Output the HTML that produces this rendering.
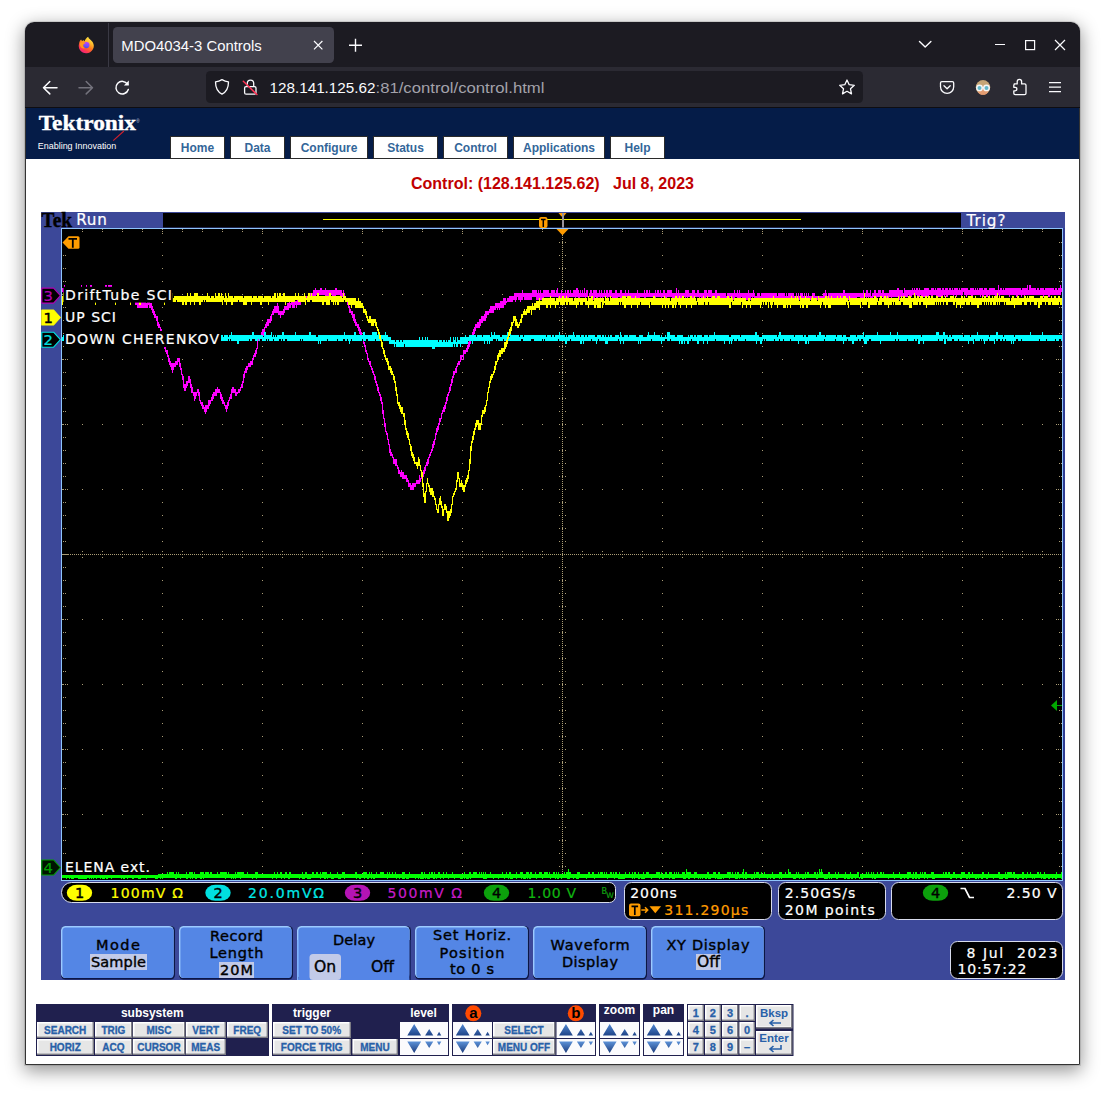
<!DOCTYPE html>
<html lang="en"><head><meta charset="utf-8"><title>MDO4034-3 Controls</title>
<style>
html,body{margin:0;padding:0;background:#fff;}
body{width:1105px;height:1093px;position:relative;overflow:hidden;font-family:"Liberation Sans",sans-serif;}
#win{position:absolute;left:25px;top:22px;width:1055px;height:1043px;border-radius:9px 9px 0 0;
 box-shadow:0 5px 18px 1px rgba(0,0,0,.42),0 0 0 1px rgba(0,0,0,.10);overflow:hidden;background:#fff;}
#win svg{position:absolute;left:0;top:0;display:block}
text{white-space:pre}
.ui{font-family:"Liberation Sans",sans-serif}
.sc{font-family:"DejaVu Sans","Liberation Sans",sans-serif}
.ab{font-family:"Liberation Sans",sans-serif;font-weight:bold}
</style></head><body>
<div id="win">
<svg width="1055" height="1043" viewBox="25 22 1055 1043">
<defs><linearGradient id="ffo" x1="0.85" y1="0.05" x2="0.3" y2="1"><stop offset="0" stop-color="#fff24a"/><stop offset="0.3" stop-color="#ffbd2f"/><stop offset="0.55" stop-color="#ff7a1c"/><stop offset="0.8" stop-color="#ff3a4e"/><stop offset="1" stop-color="#f0207e"/></linearGradient><linearGradient id="ffp" x1="0.6" y1="0" x2="0.4" y2="1"><stop offset="0" stop-color="#c03cff"/><stop offset="0.55" stop-color="#7a4cff"/><stop offset="1" stop-color="#3f52d8"/></linearGradient></defs>
<rect x="25" y="22" width="1055" height="45" fill="#1c1b22"/>
<rect x="25" y="67" width="1055" height="40" fill="#2b2a33"/>
<rect x="25" y="107" width="1055" height="1" fill="#0e0d12"/>
<g><path d="M86.100 53.200a7.300 7.300 0 0 1-7-9.600c.2-1.900.9-3.200 2-4.100c.2.800.6 1.300 1.200 1.500c.4-.500.800-.700 1.400-.800l.900 1.300c.200-2 1.700-3.400 3.500-4.800c.600 2 2.800 3.200 4.500 5.300a7.300 7.300 0 0 1-6.500 11.200z" fill="url(#ffo)"/><circle cx="86.400" cy="45.100" r="3.100" fill="url(#ffp)"/><path d="M80.300 42.600c1.500-.900 3.300-.700 5.600.600c-1.700.200-2.700.900-3 2c-.300 1.400.700 2.600 2.300 2.900c-2.200.900-4.300-.100-5-2.100c-.400-1.200-.300-2.400.100-3.400z" fill="#ff9a1a"/></g>
<rect x="108" y="23" width="1" height="44" fill="#3a3944"/>
<rect x="113" y="27" width="221" height="36" rx="4.500" fill="#42414d"/>
<text class="ui" x="121.300" y="50.600" font-size="14.600" fill="#fbfbfe" textLength="140.500" lengthAdjust="spacingAndGlyphs">MDO4034-3 Controls</text>
<path d="M314 41l8.400 8.400M322.400 41l-8.400 8.400" stroke="#fbfbfe" stroke-width="1.200" fill="none"/>
<path d="M349 45.300h13M355.500 38.800v13" stroke="#fbfbfe" stroke-width="1.400" fill="none"/>
<path d="M919.500 41.500l5.700 5.600l5.700-5.600" stroke="#fbfbfe" stroke-width="1.400" fill="none" stroke-linejoin="round" stroke-linecap="round"/>
<path d="M995 44.500h10" stroke="#fbfbfe" stroke-width="1.200" fill="none"/>
<rect x="1025.600" y="40.600" width="9" height="9" fill="none" stroke="#fbfbfe" stroke-width="1.200"/>
<path d="M1055 40l10 10M1065 40l-10 10" stroke="#fbfbfe" stroke-width="1.200" fill="none"/>
<path d="M57 87.700h-13.500M49.800 81.500l-6.300 6.200l6.300 6.200" stroke="#fbfbfe" stroke-width="1.500" fill="none" stroke-linecap="round" stroke-linejoin="round"/>
<path d="M79 87.700h13.500M86.200 81.500l6.300 6.200l-6.300 6.200" stroke="#73727c" stroke-width="1.500" fill="none" stroke-linecap="round" stroke-linejoin="round"/>
<path d="M127.600 84.300a6.300 6.300 0 1 0 .7 5.200" stroke="#fbfbfe" stroke-width="1.500" fill="none" stroke-linecap="round"/><path d="M128.800 80.600v4.900h-4.900z" fill="#fbfbfe"/>
<rect x="206" y="71" width="657" height="32" rx="4.500" fill="#1c1b22"/>
<path d="M222 79.600c2.100 1.300 4.300 2 6.500 2.200c0 5.600-1.800 10-6.500 12.400c-4.700-2.400-6.500-6.800-6.500-12.400c2.200-.2 4.400-.9 6.500-2.200z" stroke="#fbfbfe" stroke-width="1.300" fill="none" stroke-linejoin="round"/>
<rect x="244.600" y="86.600" width="11.400" height="7.600" rx="1.500" fill="none" stroke="#fbfbfe" stroke-width="1.300"/><path d="M247.300 86.400v-3.100a3.200 3.200 0 0 1 6.400 0v3.100" fill="none" stroke="#fbfbfe" stroke-width="1.300"/><path d="M243.300 81.200l13.600 13.300" stroke="#ff3355" stroke-width="1.500" fill="none" stroke-linecap="round"/>
<text class="ui" x="269.500" y="93" font-size="14.600"><tspan fill="#fbfbfe" textLength="106" lengthAdjust="spacingAndGlyphs">128.141.125.62</tspan><tspan fill="#a3a2ab" textLength="169" lengthAdjust="spacingAndGlyphs">:81/control/control.html</tspan></text>
<path d="M847 80l2.200 4.700l5.100.6l-3.800 3.500l1 5.100l-4.500-2.600l-4.500 2.600l1-5.100l-3.800-3.500l5.100-.6z" stroke="#fbfbfe" stroke-width="1.300" fill="none" stroke-linejoin="round"/>
<path d="M941.900 81.700h10.400a1.400 1.400 0 0 1 1.400 1.400v3.700a6.600 6.600 0 0 1-13.200 0v-3.700a1.400 1.400 0 0 1 1.400-1.400z" stroke="#fbfbfe" stroke-width="1.300" fill="none"/><path d="M944 85.800l3.100 3l3.100-3" stroke="#fbfbfe" stroke-width="1.300" fill="none" stroke-linecap="round" stroke-linejoin="round"/>
<g><circle cx="983" cy="87.300" r="7.200" fill="#c6a576"/><path d="M977.600 88.500a5.400 5.800 0 0 0 10.800 0v2a5.400 4.600 0 0 1-10.800 0z" fill="#e0986c"/><ellipse cx="983" cy="91" rx="4.800" ry="3.600" fill="#e39c72"/><rect x="976.200" y="87" width="13.600" height="1.400" fill="#f2f2f2"/><circle cx="979.500" cy="87.900" r="2.700" fill="#62b6c8" stroke="#f6f6f6" stroke-width="1.400"/><circle cx="986.500" cy="87.900" r="2.700" fill="#62b6c8" stroke="#f6f6f6" stroke-width="1.400"/></g>
<path d="M1014.200 83.900h3v-2.300a2.200 2.200 0 0 1 4.400 0v2.300h3a1.400 1.400 0 0 1 1.400 1.400v8a1.400 1.400 0 0 1-1.400 1.400h-9.400a1.400 1.400 0 0 1-1.400-1.400v-2.400h1.300a1.800 1.800 0 1 0 0-3.600h-1.300v-2a1.400 1.400 0 0 1 1.400-1.400z" stroke="#fbfbfe" stroke-width="1.300" fill="none" stroke-linejoin="round"/>
<path d="M1049 82.600h12M1049 87.100h12M1049 91.600h12" stroke="#fbfbfe" stroke-width="1.300" fill="none"/>
<rect x="25" y="108" width="1055" height="957" fill="#ffffff"/>
<rect x="25" y="108" width="1055" height="51" fill="#051c48"/>
<text x="38.700" y="129.800" font-family="'Liberation Serif',serif" font-weight="bold" font-size="20.500" fill="#ffffff" textLength="97.300" lengthAdjust="spacingAndGlyphs" stroke="#ffffff" stroke-width="0.350">Tektronix</text>
<text x="136.300" y="123.400" font-family="'Liberation Sans',sans-serif" font-size="4.500" fill="#c8d0e0">®</text>
<path d="M113.200 140.600L123.900 131" stroke="#d3202c" stroke-width="1.100" fill="none"/>
<text class="ui" x="37.800" y="148.900" font-size="9.700" fill="#ffffff" textLength="78.500" lengthAdjust="spacingAndGlyphs">Enabling Innovation</text>
<rect x="170.5" y="136.500" width="54" height="22" fill="#ffffff" stroke="#2a2a2a" stroke-width="1"/>
<text class="ab" x="197.5" y="151.600" font-size="12" fill="#336699" text-anchor="middle">Home</text>
<rect x="230.5" y="136.500" width="54" height="22" fill="#ffffff" stroke="#2a2a2a" stroke-width="1"/>
<text class="ab" x="257.5" y="151.600" font-size="12" fill="#336699" text-anchor="middle">Data</text>
<rect x="290.5" y="136.500" width="77" height="22" fill="#ffffff" stroke="#2a2a2a" stroke-width="1"/>
<text class="ab" x="329" y="151.600" font-size="12" fill="#336699" text-anchor="middle">Configure</text>
<rect x="373.5" y="136.500" width="64" height="22" fill="#ffffff" stroke="#2a2a2a" stroke-width="1"/>
<text class="ab" x="405.5" y="151.600" font-size="12" fill="#336699" text-anchor="middle">Status</text>
<rect x="443.5" y="136.500" width="64" height="22" fill="#ffffff" stroke="#2a2a2a" stroke-width="1"/>
<text class="ab" x="475.5" y="151.600" font-size="12" fill="#336699" text-anchor="middle">Control</text>
<rect x="513.5" y="136.500" width="91" height="22" fill="#ffffff" stroke="#2a2a2a" stroke-width="1"/>
<text class="ab" x="559" y="151.600" font-size="12" fill="#336699" text-anchor="middle">Applications</text>
<rect x="610.5" y="136.500" width="54" height="22" fill="#ffffff" stroke="#2a2a2a" stroke-width="1"/>
<text class="ab" x="637.5" y="151.600" font-size="12" fill="#336699" text-anchor="middle">Help</text>
<text class="ab" x="552.500" y="188.700" font-size="16" fill="#c00000" text-anchor="middle" textLength="283" lengthAdjust="spacingAndGlyphs">Control: (128.141.125.62)   Jul 8, 2023</text>
<g id="scope">
<rect x="41" y="212" width="1024" height="768" fill="#3c4899"/>
<rect x="163" y="213" width="798" height="14.500" fill="#000"/>
<rect x="61.500" y="228.500" width="1001" height="652" fill="#000" stroke="#8ec4fb" stroke-width="1"/>
<rect x="1063" y="228" width="2" height="653" fill="#303c92"/>
<g stroke="#ab9d76" stroke-width="1" fill="none" shape-rendering="crispEdges">
<path d="M162.5 229V879" stroke-dasharray="1 12"/>
<path d="M262.5 229V879" stroke-dasharray="1 12"/>
<path d="M362.5 229V879" stroke-dasharray="1 12"/>
<path d="M462.5 229V879" stroke-dasharray="1 12"/>
<path d="M662.5 229V879" stroke-dasharray="1 12"/>
<path d="M762.5 229V879" stroke-dasharray="1 12"/>
<path d="M862.5 229V879" stroke-dasharray="1 12"/>
<path d="M962.5 229V879" stroke-dasharray="1 12"/>
<path d="M62 294.5H1062" stroke-dasharray="1 19"/>
<path d="M62 359.5H1062" stroke-dasharray="1 19"/>
<path d="M62 424.5H1062" stroke-dasharray="1 19"/>
<path d="M62 489.5H1062" stroke-dasharray="1 19"/>
<path d="M62 619.5H1062" stroke-dasharray="1 19"/>
<path d="M62 684.5H1062" stroke-dasharray="1 19"/>
<path d="M62 749.5H1062" stroke-dasharray="1 19"/>
<path d="M62 814.5H1062" stroke-dasharray="1 19"/>
<path d="M62 554.5H1062" stroke-dasharray="1 1"/>
<path d="M562.5 229V879" stroke-dasharray="1 1"/>
<path d="M82.5 551v7M102.5 551v7M122.5 551v7M142.5 551v7M162.5 551v7M182.5 551v7M202.5 551v7M222.5 551v7M242.5 551v7M262.5 551v7M282.5 551v7M302.5 551v7M322.5 551v7M342.5 551v7M362.5 551v7M382.5 551v7M402.5 551v7M422.5 551v7M442.5 551v7M462.5 551v7M482.5 551v7M502.5 551v7M522.5 551v7M542.5 551v7M582.5 551v7M602.5 551v7M622.5 551v7M642.5 551v7M662.5 551v7M682.5 551v7M702.5 551v7M722.5 551v7M742.5 551v7M762.5 551v7M782.5 551v7M802.5 551v7M822.5 551v7M842.5 551v7M862.5 551v7M882.5 551v7M902.5 551v7M922.5 551v7M942.5 551v7M962.5 551v7M982.5 551v7M1002.5 551v7M1022.5 551v7M1042.5 551v7" stroke-dasharray="1 2"/>
<path d="M559 242.5h7M559 255.5h7M559 268.5h7M559 281.5h7M559 294.5h7M559 307.5h7M559 320.5h7M559 333.5h7M559 346.5h7M559 359.5h7M559 372.5h7M559 385.5h7M559 398.5h7M559 411.5h7M559 424.5h7M559 437.5h7M559 450.5h7M559 463.5h7M559 476.5h7M559 489.5h7M559 502.5h7M559 515.5h7M559 528.5h7M559 541.5h7M559 567.5h7M559 580.5h7M559 593.5h7M559 606.5h7M559 619.5h7M559 632.5h7M559 645.5h7M559 658.5h7M559 671.5h7M559 684.5h7M559 697.5h7M559 710.5h7M559 723.5h7M559 736.5h7M559 749.5h7M559 762.5h7M559 775.5h7M559 788.5h7M559 801.5h7M559 814.5h7M559 827.5h7M559 840.5h7M559 853.5h7M559 866.5h7" stroke-dasharray="1 2"/>
<path d="M63 242.5h3M63 255.5h3M63 268.5h3M63 281.5h3M63 294.5h5M63 307.5h3M63 320.5h3M63 333.5h3M63 346.5h3M63 359.5h5M63 372.5h3M63 385.5h3M63 398.5h3M63 411.5h3M63 424.5h5M63 437.5h3M63 450.5h3M63 463.5h3M63 476.5h3M63 489.5h5M63 502.5h3M63 515.5h3M63 528.5h3M63 541.5h3M63 554.5h5M63 567.5h3M63 580.5h3M63 593.5h3M63 606.5h3M63 619.5h5M63 632.5h3M63 645.5h3M63 658.5h3M63 671.5h3M63 684.5h5M63 697.5h3M63 710.5h3M63 723.5h3M63 736.5h3M63 749.5h5M63 762.5h3M63 775.5h3M63 788.5h3M63 801.5h3M63 814.5h5M63 827.5h3M63 840.5h3M63 853.5h3M63 866.5h3M1059 242.5h3M1059 255.5h3M1059 268.5h3M1059 281.5h3M1056 294.5h5M1059 307.5h3M1059 320.5h3M1059 333.5h3M1059 346.5h3M1056 359.5h5M1059 372.5h3M1059 385.5h3M1059 398.5h3M1059 411.5h3M1056 424.5h5M1059 437.5h3M1059 450.5h3M1059 463.5h3M1059 476.5h3M1056 489.5h5M1059 502.5h3M1059 515.5h3M1059 528.5h3M1059 541.5h3M1056 554.5h5M1059 567.5h3M1059 580.5h3M1059 593.5h3M1059 606.5h3M1056 619.5h5M1059 632.5h3M1059 645.5h3M1059 658.5h3M1059 671.5h3M1056 684.5h5M1059 697.5h3M1059 710.5h3M1059 723.5h3M1059 736.5h3M1056 749.5h5M1059 762.5h3M1059 775.5h3M1059 788.5h3M1059 801.5h3M1056 814.5h5M1059 827.5h3M1059 840.5h3M1059 853.5h3M1059 866.5h3" stroke-dasharray="1 1"/>
<path d="M82.5 229v3M82.5 875v3M102.5 229v3M102.5 875v3M122.5 229v3M122.5 875v3M142.5 229v3M142.5 875v3M162.5 229v5M162.5 873v5M182.5 229v3M182.5 875v3M202.5 229v3M202.5 875v3M222.5 229v3M222.5 875v3M242.5 229v3M242.5 875v3M262.5 229v5M262.5 873v5M282.5 229v3M282.5 875v3M302.5 229v3M302.5 875v3M322.5 229v3M322.5 875v3M342.5 229v3M342.5 875v3M362.5 229v5M362.5 873v5M382.5 229v3M382.5 875v3M402.5 229v3M402.5 875v3M422.5 229v3M422.5 875v3M442.5 229v3M442.5 875v3M462.5 229v5M462.5 873v5M482.5 229v3M482.5 875v3M502.5 229v3M502.5 875v3M522.5 229v3M522.5 875v3M542.5 229v3M542.5 875v3M562.5 229v5M562.5 873v5M582.5 229v3M582.5 875v3M602.5 229v3M602.5 875v3M622.5 229v3M622.5 875v3M642.5 229v3M642.5 875v3M662.5 229v5M662.5 873v5M682.5 229v3M682.5 875v3M702.5 229v3M702.5 875v3M722.5 229v3M722.5 875v3M742.5 229v3M742.5 875v3M762.5 229v5M762.5 873v5M782.5 229v3M782.5 875v3M802.5 229v3M802.5 875v3M822.5 229v3M822.5 875v3M842.5 229v3M842.5 875v3M862.5 229v5M862.5 873v5M882.5 229v3M882.5 875v3M902.5 229v3M902.5 875v3M922.5 229v3M922.5 875v3M942.5 229v3M942.5 875v3M962.5 229v5M962.5 873v5M982.5 229v3M982.5 875v3M1002.5 229v3M1002.5 875v3M1022.5 229v3M1022.5 875v3M1042.5 229v3M1042.5 875v3" stroke-dasharray="1 1"/>
</g>
<path d="M62 872v6M63 874v4M64 874v4M65 874v4M66 874v5M67 874v4M68 872v6M69 874v5M70 872v6M71 874v5M72 872v7M73 872v7M74 874v4M75 872v6M76 872v6M77 872v6M78 872v7M79 874v5M80 874v5M81 874v5M82 874v5M83 874v5M84 874v5M85 874v5M86 872v7M87 874v4M88 874v4M89 874v5M90 874v4M91 874v5M92 872v6M93 872v7M94 872v6M95 874v4M96 872v7M97 874v4M98 872v6M99 872v6M100 874v5M101 874v4M102 874v5M103 872v7M104 874v5M105 872v6M106 874v5M107 874v5M108 872v6M109 874v4M110 874v4M111 874v5M112 872v6M113 874v4M114 874v4M115 872v6M116 872v6M117 872v6M118 874v4M119 874v4M120 872v6M121 872v7M122 874v4M123 872v7M124 874v5M125 874v4M126 874v4M127 874v5M128 874v4M129 872v6M130 872v6M131 874v4M132 874v5M133 874v5M134 874v4M135 874v4M136 872v6M137 874v4M138 872v7M139 872v7M140 874v5M141 872v6M142 874v4M143 874v4M144 872v6M145 872v6M146 874v5M147 872v6M148 874v4M149 874v4M150 874v4M151 872v6M152 872v6M153 872v6M154 874v4M155 872v7M156 872v7M157 874v5M158 874v4M159 874v4M160 874v5M161 874v4M162 874v5M163 874v4M164 874v4M165 874v4M166 874v4M167 872v6M168 874v4M169 872v6M170 872v6M171 872v6M172 872v6M173 872v6M174 874v4M175 874v5M176 872v7M177 874v4M178 872v6M179 874v4M180 874v5M181 874v4M182 874v4M183 874v4M184 874v4M185 874v4M186 872v7M187 874v5M188 874v4M189 872v6M190 872v7M191 872v6M192 872v7M193 874v4M194 872v6M195 874v5M196 874v5M197 874v4M198 874v4M199 874v4M200 872v7M201 872v7M202 872v6M203 872v7M204 874v4M205 872v6M206 872v6M207 872v6M208 872v6M209 874v4M210 872v6M211 872v6M212 874v4M213 874v4M214 874v4M215 874v4M216 874v4M217 872v6M218 874v4M219 874v4M220 872v6M221 872v6M222 872v6M223 872v6M224 872v6M225 872v7M226 872v6M227 874v4M228 872v6M229 874v4M230 874v4M231 874v5M232 874v4M233 874v5M234 874v4M235 872v7M236 874v4M237 872v6M238 872v6M239 872v6M240 872v7M241 872v6M242 872v6M243 872v6M244 874v4M245 874v4M246 874v4M247 872v6M248 874v4M249 874v4M250 874v4M251 874v4M252 874v5M253 874v4M254 874v4M255 872v6M256 872v7M257 872v6M258 874v4M259 874v4M260 874v4M261 874v4M262 874v4M263 874v4M264 874v4M265 874v4M266 874v4M267 874v4M268 874v4M269 874v4M270 874v4M271 874v4M272 874v5M273 874v4M274 872v6M275 874v4M276 874v5M277 872v6M278 874v4M279 874v4M280 872v6M281 872v7M282 874v4M283 874v4M284 874v5M285 872v6M286 872v6M287 874v4M288 874v5M289 872v7M290 872v6M291 874v4M292 874v4M293 874v4M294 874v4M295 874v4M296 874v4M297 874v4M298 874v4M299 874v5M300 874v4M301 874v4M302 872v7M303 874v5M304 874v5M305 872v6M306 872v6M307 874v5M308 874v5M309 874v5M310 874v5M311 874v4M312 872v6M313 872v6M314 874v4M315 874v4M316 872v6M317 872v6M318 874v4M319 874v4M320 872v7M321 874v4M322 872v6M323 872v6M324 872v7M325 872v7M326 872v6M327 874v5M328 874v4M329 874v4M330 872v6M331 874v5M332 874v5M333 874v5M334 874v4M335 874v4M336 874v4M337 872v6M338 874v5M339 874v5M340 874v5M341 874v4M342 872v6M343 872v6M344 872v7M345 874v4M346 874v4M347 874v4M348 874v4M349 874v4M350 874v4M351 874v4M352 874v4M353 874v4M354 874v4M355 872v6M356 872v7M357 874v4M358 874v4M359 874v5M360 874v5M361 874v4M362 874v4M363 872v6M364 872v7M365 872v6M366 872v6M367 874v5M368 874v5M369 872v6M370 874v4M371 872v7M372 874v4M373 874v5M374 874v5M375 874v4M376 872v6M377 874v4M378 874v4M379 874v4M380 872v6M381 872v6M382 872v6M383 872v6M384 874v4M385 874v4M386 874v4M387 872v7M388 874v4M389 872v6M390 874v4M391 874v4M392 872v6M393 874v4M394 874v4M395 872v6M396 874v5M397 874v4M398 874v4M399 874v5M400 874v4M401 874v4M402 872v7M403 872v7M404 872v7M405 874v4M406 874v5M407 874v5M408 874v5M409 872v6M410 874v4M411 874v4M412 874v4M413 874v4M414 874v4M415 874v5M416 874v4M417 874v4M418 874v5M419 874v4M420 874v5M421 872v7M422 872v7M423 874v5M424 872v6M425 874v5M426 874v4M427 874v5M428 874v5M429 872v7M430 874v4M431 872v6M432 872v6M433 874v5M434 872v7M435 874v4M436 874v5M437 874v4M438 872v6M439 872v6M440 874v5M441 874v4M442 874v4M443 872v7M444 874v4M445 874v4M446 872v6M447 874v4M448 874v5M449 874v4M450 874v4M451 874v4M452 872v6M453 874v4M454 874v5M455 874v4M456 874v4M457 874v4M458 874v4M459 874v4M460 874v5M461 874v5M462 874v5M463 874v4M464 872v7M465 874v4M466 874v5M467 874v5M468 874v5M469 872v6M470 872v7M471 874v4M472 874v4M473 872v6M474 872v6M475 872v6M476 872v6M477 874v4M478 874v4M479 872v6M480 874v4M481 872v6M482 874v4M483 872v7M484 874v5M485 872v7M486 874v5M487 874v4M488 874v4M489 874v4M490 872v6M491 874v4M492 874v4M493 874v5M494 874v4M495 874v4M496 874v4M497 874v4M498 874v5M499 874v4M500 874v4M501 874v4M502 872v6M503 874v4M504 874v5M505 874v4M506 872v6M507 874v4M508 874v5M509 872v6M510 872v7M511 874v5M512 874v5M513 874v4M514 874v4M515 874v4M516 872v7M517 874v4M518 874v4M519 874v4M520 872v6M521 872v7M522 872v6M523 874v5M524 874v5M525 874v5M526 872v6M527 872v7M528 872v6M529 874v5M530 872v7M531 872v6M532 874v4M533 874v4M534 874v4M535 872v6M536 874v5M537 874v4M538 874v4M539 872v6M540 872v6M541 872v6M542 874v5M543 874v4M544 872v6M545 872v6M546 872v6M547 872v6M548 874v4M549 872v6M550 874v5M551 874v4M552 874v4M553 872v6M554 872v6M555 874v5M556 872v6M557 874v5M558 872v7M559 874v4M560 874v4M561 874v5M562 874v4M563 874v4M564 872v6M565 874v4M566 872v6M567 872v7M568 869v10M569 872v7M570 872v6M571 874v4M572 874v4M573 874v5M574 874v4M575 874v4M576 874v5M577 872v7M578 872v7M579 872v6M580 874v4M581 874v4M582 874v4M583 874v4M584 874v4M585 874v4M586 874v5M587 874v4M588 872v6M589 872v6M590 874v4M591 874v4M592 872v6M593 872v6M594 874v5M595 874v4M596 874v4M597 874v4M598 872v6M599 874v4M600 872v6M601 872v6M602 872v6M603 874v4M604 872v6M605 874v4M606 872v6M607 874v5M608 874v4M609 874v4M610 872v6M611 872v6M612 874v4M613 872v6M614 874v5M615 872v6M616 872v6M617 874v4M618 874v5M619 872v7M620 874v5M621 874v5M622 874v5M623 874v5M624 874v5M625 872v6M626 874v4M627 874v4M628 874v4M629 872v6M630 874v4M631 874v4M632 872v7M633 874v4M634 872v7M635 872v6M636 874v4M637 874v4M638 872v7M639 874v5M640 874v4M641 874v5M642 874v5M643 872v7M644 874v5M645 874v4M646 872v6M647 872v6M648 872v6M649 874v4M650 874v4M651 874v5M652 874v4M653 874v4M654 874v4M655 874v4M656 872v6M657 872v6M658 872v6M659 872v7M660 874v4M661 872v6M662 874v5M663 874v5M664 874v4M665 872v6M666 872v6M667 874v4M668 874v4M669 872v7M670 872v6M671 872v6M672 874v5M673 874v5M674 872v7M675 874v4M676 872v6M677 874v4M678 872v6M679 874v4M680 874v4M681 874v4M682 872v6M683 872v7M684 872v7M685 874v5M686 869v9M687 872v6M688 872v7M689 872v7M690 872v6M691 874v4M692 874v4M693 874v4M694 872v7M695 872v6M696 872v6M697 874v4M698 874v5M699 874v4M700 874v5M701 874v4M702 874v5M703 874v4M704 874v4M705 874v5M706 874v5M707 872v6M708 872v7M709 874v5M710 874v5M711 874v4M712 874v4M713 872v6M714 872v6M715 872v7M716 874v4M717 874v5M718 872v7M719 872v7M720 874v5M721 874v5M722 874v4M723 874v5M724 874v4M725 874v4M726 874v4M727 872v6M728 872v6M729 872v7M730 872v6M731 874v4M732 872v6M733 874v4M734 874v4M735 872v7M736 874v5M737 872v7M738 872v6M739 874v5M740 874v4M741 874v4M742 872v6M743 869v10M744 874v4M745 872v7M746 872v7M747 874v4M748 874v4M749 874v4M750 874v4M751 874v5M752 874v5M753 874v4M754 872v7M755 874v4M756 872v6M757 872v6M758 872v6M759 874v5M760 874v4M761 872v6M762 874v4M763 874v4M764 872v6M765 874v4M766 874v4M767 874v5M768 874v4M769 874v4M770 874v5M771 874v4M772 872v6M773 874v5M774 874v5M775 874v4M776 874v4M777 874v4M778 874v4M779 872v7M780 872v6M781 872v7M782 874v4M783 874v4M784 874v4M785 872v6M786 874v4M787 874v4M788 869v9M789 872v6M790 872v6M791 874v4M792 874v4M793 874v5M794 874v5M795 874v5M796 872v6M797 874v4M798 872v6M799 874v5M800 874v4M801 874v4M802 874v5M803 874v5M804 874v4M805 872v7M806 874v4M807 872v6M808 872v6M809 874v4M810 874v4M811 874v4M812 874v4M813 874v4M814 872v6M815 872v6M816 874v5M817 872v7M818 874v4M819 869v9M820 872v6M821 869v9M822 872v6M823 874v4M824 874v5M825 874v5M826 874v5M827 874v5M828 872v6M829 872v7M830 874v4M831 874v5M832 874v4M833 874v4M834 874v4M835 872v6M836 874v5M837 874v5M838 872v6M839 874v4M840 874v4M841 874v4M842 874v4M843 874v4M844 874v5M845 872v7M846 874v4M847 874v5M848 874v5M849 874v5M850 872v6M851 874v5M852 874v5M853 874v4M854 874v4M855 874v5M856 874v4M857 872v6M858 872v6M859 877v2M860 874v4M861 874v5M862 874v5M863 874v4M864 874v4M865 874v4M866 872v6M867 874v4M868 872v6M869 874v4M870 874v4M871 872v6M872 874v5M873 872v6M874 874v5M875 874v5M876 874v4M877 872v6M878 874v4M879 874v4M880 872v6M881 872v6M882 874v4M883 872v6M884 874v4M885 874v4M886 874v4M887 874v4M888 874v5M889 874v4M890 874v4M891 874v4M892 874v4M893 872v6M894 874v5M895 874v4M896 874v4M897 874v4M898 874v4M899 872v6M900 874v5M901 874v5M902 874v4M903 874v4M904 874v5M905 874v4M906 874v4M907 872v7M908 872v7M909 872v6M910 872v6M911 874v4M912 874v5M913 872v7M914 874v4M915 872v7M916 872v7M917 874v4M918 874v5M919 874v5M920 872v6M921 874v4M922 872v6M923 874v4M924 872v7M925 872v6M926 874v4M927 874v5M928 874v4M929 874v4M930 874v4M931 872v6M932 872v7M933 872v7M934 874v5M935 874v4M936 874v4M937 874v4M938 874v4M939 874v4M940 874v4M941 874v4M942 874v4M943 872v6M944 874v4M945 872v6M946 872v6M947 874v4M948 872v6M949 872v6M950 874v5M951 874v5M952 874v4M953 872v6M954 872v6M955 874v4M956 874v5M957 874v4M958 874v4M959 874v4M960 874v5M961 872v7M962 872v6M963 872v6M964 872v6M965 874v4M966 874v5M967 874v5M968 872v6M969 872v7M970 874v4M971 874v4M972 872v6M973 874v4M974 874v4M975 874v5M976 874v5M977 874v4M978 874v5M979 874v4M980 874v4M981 874v5M982 872v7M983 872v6M984 874v4M985 874v4M986 874v5M987 874v5M988 872v6M989 874v4M990 874v4M991 874v4M992 874v4M993 874v5M994 874v4M995 874v4M996 874v4M997 874v4M998 872v6M999 872v7M1000 874v5M1001 874v5M1002 874v5M1003 874v4M1004 874v4M1005 872v7M1006 874v5M1007 872v7M1008 872v6M1009 872v6M1010 872v6M1011 872v6M1012 874v4M1013 872v6M1014 872v7M1015 874v4M1016 874v4M1017 874v5M1018 874v5M1019 874v4M1020 874v4M1021 874v4M1022 872v7M1023 872v7M1024 874v4M1025 874v4M1026 874v5M1027 872v6M1028 874v4M1029 874v4M1030 872v6M1031 874v4M1032 874v5M1033 874v4M1034 874v5M1035 874v4M1036 874v4M1037 872v6M1038 872v6M1039 874v4M1040 872v6M1041 874v5M1042 874v4M1043 874v5M1044 872v7M1045 874v5M1046 874v4M1047 874v4M1048 874v5M1049 874v5M1050 874v4M1051 874v4M1052 874v5M1053 874v4M1054 874v4M1055 874v5M1056 872v7M1057 874v4M1058 874v4M1059 874v4M1060 874v4M1061 872v7" stroke="#00ff00" stroke-width="1" fill="none" shape-rendering="crispEdges" transform="translate(.5,0)"/>
<path d="M62 288v4M63 288v7M64 285v10M65 288v4M66 288v7M67 288v7M68 288v7M69 288v7M70 288v7M71 288v7M72 288v7M73 288v4M74 288v4M75 288v4M76 288v7M77 288v7M78 288v7M79 290v5M80 288v7M81 285v7M82 288v7M83 288v4M84 288v4M85 288v7M86 285v10M87 288v7M88 288v7M89 288v4M90 285v10M91 285v10M92 288v7M93 288v7M94 288v7M95 288v7M96 288v7M97 288v7M98 288v7M99 288v7M100 288v7M101 288v7M102 288v7M103 288v4M104 288v4M105 285v7M106 285v7M107 288v7M108 285v7M109 285v7M110 285v10M111 285v10M112 288v4M113 288v7M114 288v7M115 288v4M116 288v4M117 288v7M118 290v2M119 288v7M120 288v7M121 290v5M122 288v7M123 290v7M124 290v5M125 290v5M126 290v7M127 293v4M128 293v4M129 296v4M130 296v6M131 296v6M132 298v4M133 296v6M134 298v4M135 301v4M136 301v4M137 298v10M138 301v7M139 301v7M140 301v7M141 298v10M142 301v7M143 301v7M144 301v7M145 301v7M146 303v5M147 301v7M148 301v4M149 301v7M150 303v5M151 303v7M152 306v7M153 309v6M154 311v7M155 314v4M156 316v5M157 316v10M158 322v6M159 324v4M160 327v4M161 329v10M162 335v9M163 337v10M164 345v4M165 345v7M166 350v4M167 350v7M168 355v7M169 358v7M170 361v6M171 363v7M172 363v10M173 363v7M174 363v4M175 361v6M176 361v4M177 358v7M178 358v4M179 358v9M180 363v7M181 368v7M182 374v6M183 376v12M184 384v7M185 384v7M186 381v7M187 381v5M188 376v7M189 376v7M190 379v9M191 384v9M192 387v6M193 392v4M194 392v9M195 392v7M196 392v4M197 389v4M198 389v7M199 392v9M200 400v4M201 402v4M202 402v7M203 405v4M204 407v5M205 405v9M206 405v7M207 405v4M208 400v9M209 400v6M210 400v4M211 397v4M212 394v7M213 392v7M214 392v4M215 389v7M216 389v7M217 387v6M218 389v4M219 389v4M220 392v7M221 394v7M222 397v7M223 400v4M224 402v4M225 405v4M226 405v7M227 402v7M228 400v6M229 397v4M230 394v5M231 389v10M232 387v6M233 387v6M234 389v4M235 389v7M236 392v4M237 392v2M238 389v4M239 389v4M240 387v4M241 384v4M242 381v7M243 374v9M244 371v7M245 368v5M246 366v7M247 366v4M248 363v4M249 363v4M250 361v6M251 361v4M252 358v7M253 355v5M254 353v4M255 350v7M256 348v6M257 340v9M258 335v6M259 335v4M260 335v4M261 332v7M262 329v7M263 329v7M264 327v7M265 324v4M266 322v6M267 319v7M268 319v7M269 319v4M270 316v7M271 314v7M272 311v4M273 309v6M274 306v7M275 306v7M276 306v7M277 303v10M278 306v9M279 311v4M280 311v7M281 311v4M282 311v4M283 309v6M284 306v7M285 306v4M286 306v4M287 303v7M288 303v7M289 301v7M290 303v5M291 298v7M292 301v7M293 298v10M294 298v10M295 301v4M296 301v7M297 298v7M298 298v7M299 298v7M300 298v7M301 298v4M302 298v4M303 296v6M304 296v6M305 296v6M306 296v4M307 296v4M308 293v7M309 293v7M310 293v7M311 293v4M312 293v7M313 290v10M314 290v7M315 288v9M316 290v5M317 290v7M318 290v7M319 290v5M320 288v7M321 288v7M322 290v5M323 290v5M324 290v5M325 288v9M326 290v7M327 290v7M328 290v7M329 290v7M330 290v7M331 290v5M332 290v7M333 290v7M334 290v7M335 288v9M336 288v7M337 290v5M338 290v5M339 290v5M340 290v7M341 290v7M342 293v4M343 290v10M344 293v7M345 296v4M346 298v4M347 298v7M348 303v5M349 306v7M350 309v4M351 311v4M352 311v7M353 314v7M354 314v9M355 319v7M356 322v4M357 324v4M358 324v7M359 327v7M360 329v7M361 332v4M362 335v4M363 337v7M364 342v5M365 345v7M366 350v4M367 353v7M368 358v4M369 361v4M370 361v6M371 366v4M372 368v5M373 371v4M374 374v6M375 376v7M376 381v5M377 384v7M378 387v6M379 392v4M380 394v7M381 397v7M382 402v12M383 410v9M384 418v9M385 423v9M386 431v4M387 433v7M388 439v6M389 444v9M390 449v7M391 452v4M392 454v4M393 457v7M394 459v5M395 459v7M396 459v7M397 465v4M398 467v7M399 470v4M400 472v5M401 470v7M402 472v7M403 472v7M404 475v4M405 475v4M406 475v7M407 478v4M408 480v7M409 483v4M410 483v7M411 485v5M412 483v7M413 483v7M414 483v4M415 483v4M416 480v4M417 480v4M418 480v4M419 475v9M420 478v4M421 475v4M422 475v4M423 470v7M424 467v7M425 465v6M426 462v4M427 459v7M428 457v7M429 454v4M430 452v4M431 449v4M432 444v7M433 441v7M434 439v6M435 433v7M436 428v7M437 426v6M438 423v7M439 418v7M440 418v4M441 413v6M442 410v4M443 407v5M444 405v7M445 402v7M446 397v7M447 394v7M448 392v4M449 387v6M450 384v7M451 379v7M452 376v7M453 371v7M454 371v4M455 368v5M456 366v7M457 363v4M458 361v4M459 361v4M460 355v7M461 355v5M462 355v2M463 350v10M464 350v4M465 350v4M466 348v4M467 345v7M468 342v7M469 340v7M470 337v7M471 335v4M472 332v7M473 329v7M474 327v7M475 324v7M476 324v4M477 322v6M478 322v6M479 319v9M480 319v7M481 316v7M482 316v7M483 316v5M484 314v7M485 311v10M486 311v7M487 311v4M488 311v4M489 309v4M490 306v7M491 306v7M492 306v7M493 306v7M494 306v4M495 303v7M496 303v5M497 303v7M498 303v5M499 303v7M500 301v7M501 301v7M502 301v7M503 298v10M504 298v7M505 298v7M506 301v2M507 298v4M508 298v4M509 296v6M510 296v6M511 296v6M512 296v6M513 296v4M514 293v7M515 293v9M516 293v7M517 293v4M518 293v7M519 293v7M520 293v9M521 293v7M522 290v10M523 293v4M524 293v7M525 293v7M526 293v7M527 293v7M528 293v7M529 293v7M530 293v7M531 293v7M532 290v7M533 290v7M534 290v7M535 290v7M536 290v10M537 293v7M538 290v10M539 293v7M540 290v10M541 293v7M542 293v7M543 290v10M544 290v7M545 290v7M546 290v7M547 290v7M548 290v7M549 293v4M550 293v4M551 290v7M552 290v7M553 290v7M554 290v7M555 293v4M556 290v7M557 288v9M558 293v7M559 293v4M560 293v7M561 290v10M562 293v7M563 293v7M564 293v7M565 290v10M566 293v7M567 290v10M568 290v10M569 293v4M570 290v7M571 293v4M572 293v4M573 290v7M574 290v7M575 290v10M576 288v9M577 288v9M578 290v10M579 293v7M580 290v7M581 293v4M582 290v7M583 293v4M584 288v9M585 293v7M586 290v7M587 290v7M588 296v4M589 293v4M590 290v7M591 290v10M592 293v4M593 290v10M594 290v10M595 290v7M596 290v10M597 293v7M598 293v4M599 290v7M600 293v7M601 290v7M602 293v7M603 293v4M604 290v7M605 293v4M606 290v7M607 290v10M608 293v4M609 290v7M610 290v7M611 290v7M612 293v7M613 293v7M614 293v7M615 290v10M616 290v10M617 293v7M618 293v4M619 293v4M620 290v10M621 290v10M622 293v7M623 293v7M624 293v4M625 290v7M626 293v4M627 293v4M628 290v7M629 293v7M630 293v7M631 293v7M632 293v7M633 293v7M634 293v7M635 293v7M636 293v7M637 290v10M638 293v7M639 293v7M640 293v4M641 293v4M642 293v4M643 293v4M644 290v10M645 293v7M646 290v7M647 290v7M648 293v4M649 290v7M650 293v4M651 293v4M652 293v4M653 293v4M654 293v7M655 290v10M656 293v4M657 290v7M658 290v7M659 293v4M660 290v7M661 293v7M662 293v4M663 290v7M664 290v7M665 293v7M666 293v7M667 290v7M668 290v7M669 290v7M670 290v7M671 290v7M672 293v7M673 293v7M674 293v7M675 293v4M676 288v12M677 293v7M678 290v10M679 293v4M680 293v7M681 293v7M682 293v4M683 293v4M684 293v4M685 290v12M686 290v7M687 290v12M688 290v7M689 293v4M690 293v7M691 293v4M692 290v10M693 290v12M694 290v7M695 293v4M696 293v4M697 290v7M698 290v7M699 293v7M700 293v4M701 293v7M702 293v7M703 293v4M704 290v10M705 290v10M706 290v7M707 293v4M708 290v7M709 290v7M710 290v7M711 290v10M712 293v7M713 293v7M714 293v4M715 290v10M716 290v10M717 293v7M718 293v7M719 293v7M720 293v7M721 293v7M722 293v7M723 293v7M724 293v7M725 293v7M726 296v4M727 293v7M728 293v4M729 293v7M730 293v4M731 293v7M732 293v7M733 293v7M734 290v10M735 293v4M736 293v4M737 290v10M738 293v7M739 290v10M740 293v7M741 293v4M742 293v9M743 293v7M744 293v7M745 293v7M746 293v7M747 293v7M748 290v10M749 293v7M750 293v7M751 293v4M752 293v7M753 290v7M754 293v9M755 296v6M756 296v4M757 293v7M758 293v7M759 293v7M760 296v6M761 293v9M762 293v7M763 293v7M764 293v7M765 293v7M766 293v7M767 293v7M768 293v7M769 293v7M770 293v7M771 293v7M772 293v7M773 293v7M774 293v7M775 293v9M776 293v9M777 296v2M778 293v7M779 293v7M780 293v7M781 293v9M782 293v9M783 293v9M784 293v9M785 296v6M786 293v7M787 296v4M788 293v7M789 293v9M790 293v7M791 293v7M792 293v7M793 293v7M794 296v4M795 296v6M796 293v9M797 296v6M798 293v7M799 296v4M800 293v9M801 293v7M802 293v7M803 296v4M804 293v9M805 296v6M806 293v7M807 296v4M808 293v7M809 296v4M810 296v4M811 296v6M812 293v7M813 293v7M814 293v9M815 296v6M816 296v4M817 296v4M818 296v4M819 296v4M820 296v4M821 296v4M822 296v6M823 293v9M824 293v9M825 290v12M826 293v7M827 296v4M828 293v7M829 293v7M830 293v9M831 293v7M832 293v7M833 293v7M834 293v9M835 293v7M836 293v7M837 293v7M838 293v9M839 293v7M840 293v7M841 293v7M842 293v7M843 290v10M844 290v10M845 293v4M846 293v9M847 293v9M848 293v7M849 293v7M850 293v7M851 293v7M852 293v7M853 293v7M854 293v7M855 293v7M856 293v7M857 293v4M858 293v4M859 293v4M860 293v7M861 293v7M862 293v7M863 290v10M864 293v9M865 293v4M866 290v10M867 290v7M868 293v7M869 293v4M870 290v10M871 296v4M872 293v7M873 293v4M874 290v7M875 290v10M876 293v7M877 293v4M878 290v7M879 290v7M880 290v10M881 293v7M882 290v7M883 290v10M884 293v4M885 293v4M886 293v7M887 293v4M888 293v7M889 290v7M890 290v7M891 290v10M892 290v7M893 290v7M894 290v7M895 290v7M896 290v7M897 288v9M898 288v9M899 290v10M900 290v7M901 290v7M902 290v7M903 293v4M904 288v9M905 290v7M906 290v7M907 290v7M908 290v5M909 290v7M910 290v7M911 290v7M912 288v7M913 290v5M914 288v9M915 290v7M916 288v7M917 288v9M918 290v7M919 288v9M920 290v5M921 290v7M922 290v7M923 290v7M924 288v9M925 288v9M926 288v9M927 288v9M928 288v9M929 290v5M930 290v5M931 288v9M932 288v9M933 288v7M934 290v5M935 288v7M936 290v7M937 288v9M938 288v9M939 288v9M940 288v9M941 290v7M942 288v9M943 288v7M944 290v7M945 288v7M946 288v9M947 288v9M948 290v5M949 288v7M950 288v7M951 290v5M952 288v7M953 290v7M954 288v7M955 288v7M956 288v9M957 288v7M958 290v5M959 288v7M960 290v5M961 288v9M962 288v7M963 288v4M964 288v7M965 288v7M966 288v9M967 288v7M968 290v5M969 290v5M970 288v7M971 288v9M972 288v9M973 288v7M974 290v5M975 288v7M976 290v5M977 288v7M978 290v5M979 288v7M980 288v9M981 288v7M982 288v9M983 290v7M984 288v7M985 288v7M986 288v9M987 290v7M988 290v5M989 288v9M990 288v7M991 288v7M992 288v7M993 288v7M994 288v7M995 290v7M996 290v7M997 290v5M998 285v10M999 290v7M1000 288v7M1001 288v7M1002 290v5M1003 288v7M1004 290v5M1005 288v7M1006 288v7M1007 288v7M1008 288v7M1009 288v9M1010 288v7M1011 288v7M1012 288v7M1013 288v7M1014 288v7M1015 288v7M1016 288v9M1017 288v9M1018 288v7M1019 288v7M1020 288v7M1021 290v7M1022 288v7M1023 288v7M1024 288v9M1025 288v7M1026 288v7M1027 285v10M1028 290v5M1029 285v10M1030 285v10M1031 288v7M1032 288v7M1033 288v7M1034 288v7M1035 288v7M1036 290v5M1037 288v7M1038 288v7M1039 290v5M1040 288v7M1041 288v7M1042 288v7M1043 288v9M1044 290v5M1045 288v7M1046 288v7M1047 288v7M1048 288v9M1049 288v9M1050 288v7M1051 288v7M1052 288v7M1053 288v7M1054 290v5M1055 288v7M1056 288v7M1057 290v5M1058 288v7M1059 288v7M1060 285v10M1061 288v4" stroke="#ff00ff" stroke-width="1" fill="none" shape-rendering="crispEdges" transform="translate(.5,0)"/>
<path d="M62 337v4M63 335v6M64 335v6M65 335v4M66 335v6M67 335v6M68 335v6M69 335v6M70 335v4M71 335v6M72 335v6M73 335v9M74 335v6M75 335v6M76 335v6M77 335v6M78 335v6M79 335v6M80 335v6M81 335v6M82 335v6M83 335v9M84 335v4M85 335v6M86 335v6M87 335v6M88 335v6M89 335v4M90 335v4M91 335v6M92 335v6M93 335v6M94 335v6M95 332v9M96 332v9M97 335v6M98 335v6M99 335v6M100 337v4M101 335v6M102 335v6M103 335v6M104 332v9M105 335v6M106 337v2M107 335v6M108 335v6M109 335v4M110 335v6M111 335v6M112 332v7M113 332v9M114 335v6M115 335v6M116 335v6M117 335v6M118 335v6M119 335v6M120 335v6M121 335v6M122 335v6M123 335v6M124 335v6M125 335v4M126 335v6M127 335v6M128 335v4M129 335v6M130 335v4M131 335v4M132 335v6M133 332v9M134 335v6M135 335v6M136 335v6M137 335v6M138 337v4M139 335v6M140 335v6M141 335v6M142 335v6M143 335v6M144 335v6M145 335v6M146 332v7M147 332v7M148 335v4M149 332v7M150 332v7M151 335v6M152 335v6M153 335v6M154 335v6M155 335v6M156 337v4M157 335v6M158 335v6M159 335v6M160 335v6M161 332v7M162 335v6M163 335v6M164 335v6M165 332v9M166 335v6M167 335v6M168 335v6M169 335v6M170 335v6M171 335v6M172 335v6M173 335v6M174 335v6M175 335v6M176 335v6M177 335v4M178 337v4M179 335v6M180 335v6M181 335v6M182 335v6M183 335v6M184 335v4M185 335v6M186 335v6M187 335v6M188 335v6M189 335v6M190 335v6M191 335v6M192 335v6M193 335v6M194 335v6M195 335v6M196 335v6M197 335v4M198 335v4M199 332v7M200 335v6M201 335v6M202 335v6M203 335v6M204 335v6M205 335v6M206 335v6M207 335v4M208 332v7M209 335v6M210 332v9M211 335v6M212 335v6M213 335v6M214 335v6M215 335v6M216 335v4M217 335v6M218 332v7M219 332v9M220 335v4M221 335v6M222 335v6M223 337v4M224 335v6M225 335v6M226 335v6M227 335v6M228 337v2M229 335v6M230 335v4M231 332v9M232 335v6M233 335v6M234 335v6M235 335v6M236 335v6M237 335v9M238 335v9M239 335v6M240 335v6M241 335v6M242 335v6M243 335v6M244 335v6M245 335v6M246 335v6M247 335v6M248 335v6M249 335v4M250 335v6M251 335v6M252 332v7M253 332v7M254 335v4M255 335v6M256 335v6M257 335v6M258 335v4M259 335v6M260 335v4M261 335v4M262 335v6M263 337v4M264 332v9M265 332v9M266 335v4M267 335v6M268 335v4M269 335v6M270 335v6M271 332v9M272 337v4M273 335v4M274 337v4M275 335v6M276 337v4M277 335v6M278 335v6M279 335v4M280 335v4M281 335v6M282 332v7M283 332v9M284 335v6M285 335v4M286 335v4M287 335v6M288 335v6M289 335v6M290 335v6M291 335v6M292 335v6M293 335v6M294 335v6M295 332v9M296 335v6M297 335v6M298 335v6M299 335v6M300 335v4M301 335v6M302 335v4M303 335v6M304 335v6M305 335v6M306 335v6M307 335v6M308 335v6M309 332v9M310 332v9M311 335v6M312 335v6M313 335v6M314 335v6M315 335v6M316 337v4M317 337v4M318 335v9M319 335v6M320 335v9M321 335v6M322 335v6M323 335v6M324 335v6M325 335v6M326 335v6M327 335v4M328 335v6M329 335v6M330 335v6M331 335v6M332 335v6M333 335v6M334 335v6M335 335v6M336 335v6M337 335v4M338 335v6M339 335v6M340 335v6M341 335v6M342 335v6M343 335v4M344 332v7M345 335v6M346 335v6M347 335v4M348 335v6M349 335v9M350 335v6M351 335v4M352 335v6M353 335v6M354 332v9M355 332v9M356 335v6M357 335v6M358 335v6M359 335v6M360 335v6M361 335v6M362 335v4M363 332v9M364 332v9M365 335v6M366 335v4M367 335v4M368 335v6M369 335v6M370 335v6M371 335v6M372 332v9M373 332v9M374 332v9M375 332v7M376 332v9M377 335v6M378 332v9M379 332v9M380 335v6M381 335v6M382 335v4M383 335v6M384 335v6M385 332v9M386 335v6M387 335v6M388 337v4M389 337v7M390 337v7M391 340v4M392 340v4M393 340v4M394 340v7M395 342v2M396 340v7M397 340v7M398 340v7M399 342v5M400 340v7M401 340v7M402 342v5M403 340v7M404 340v4M405 340v7M406 340v7M407 340v7M408 340v7M409 340v7M410 340v7M411 340v7M412 340v7M413 340v7M414 340v7M415 340v7M416 340v7M417 340v7M418 340v7M419 337v10M420 340v7M421 340v7M422 337v10M423 340v7M424 340v7M425 337v10M426 340v7M427 337v10M428 340v7M429 340v7M430 340v7M431 340v7M432 340v9M433 340v9M434 340v9M435 340v7M436 340v7M437 340v7M438 342v5M439 340v7M440 340v7M441 340v7M442 342v5M443 340v7M444 340v7M445 342v5M446 340v7M447 342v5M448 340v7M449 340v7M450 337v10M451 342v5M452 342v5M453 337v7M454 340v7M455 337v7M456 342v5M457 337v10M458 340v4M459 340v4M460 337v10M461 337v7M462 337v7M463 337v7M464 337v7M465 335v9M466 337v7M467 337v7M468 337v4M469 335v6M470 335v6M471 335v6M472 335v9M473 335v6M474 335v6M475 335v6M476 337v4M477 335v6M478 335v6M479 335v6M480 335v6M481 335v6M482 337v4M483 335v6M484 335v9M485 335v6M486 335v6M487 335v9M488 335v6M489 335v9M490 337v4M491 332v9M492 335v6M493 335v4M494 332v7M495 335v4M496 335v6M497 335v4M498 335v6M499 335v6M500 337v4M501 337v4M502 335v6M503 335v4M504 335v6M505 335v6M506 335v6M507 332v9M508 335v6M509 337v4M510 332v9M511 335v6M512 335v6M513 335v6M514 335v6M515 335v6M516 335v6M517 335v6M518 335v6M519 337v4M520 335v6M521 335v4M522 335v4M523 337v4M524 335v6M525 335v6M526 335v6M527 335v6M528 335v6M529 335v6M530 335v6M531 335v4M532 335v4M533 335v4M534 335v6M535 335v6M536 335v6M537 335v6M538 335v6M539 335v6M540 335v6M541 335v6M542 335v4M543 335v6M544 335v4M545 335v6M546 337v4M547 335v6M548 335v6M549 335v6M550 335v6M551 337v4M552 335v6M553 335v6M554 337v4M555 335v6M556 335v6M557 335v6M558 335v4M559 332v9M560 335v6M561 335v6M562 335v6M563 335v6M564 335v6M565 337v7M566 335v9M567 337v4M568 335v6M569 335v6M570 335v4M571 335v6M572 335v6M573 332v9M574 335v6M575 337v4M576 335v6M577 335v6M578 335v6M579 335v6M580 337v7M581 335v9M582 335v6M583 335v9M584 337v4M585 335v6M586 335v6M587 337v4M588 335v6M589 335v6M590 335v6M591 335v4M592 335v6M593 335v6M594 335v6M595 337v4M596 337v7M597 335v6M598 335v4M599 335v6M600 335v6M601 337v4M602 335v6M603 335v6M604 337v4M605 335v9M606 337v7M607 337v7M608 335v6M609 337v4M610 335v6M611 335v6M612 337v4M613 337v4M614 337v4M615 335v6M616 335v6M617 335v6M618 335v4M619 337v4M620 332v12M621 335v6M622 337v4M623 337v7M624 335v6M625 335v6M626 335v6M627 335v6M628 337v4M629 335v6M630 335v6M631 335v6M632 335v6M633 335v6M634 335v6M635 335v6M636 337v4M637 337v4M638 337v7M639 335v6M640 335v9M641 335v6M642 335v6M643 337v4M644 337v4M645 337v4M646 337v4M647 335v6M648 332v9M649 335v6M650 335v6M651 335v4M652 335v6M653 335v6M654 332v9M655 335v6M656 335v6M657 335v6M658 335v6M659 335v6M660 337v4M661 335v9M662 337v4M663 337v4M664 337v4M665 335v4M666 337v2M667 332v9M668 332v9M669 332v9M670 335v4M671 335v6M672 335v6M673 335v6M674 335v6M675 337v4M676 337v4M677 335v6M678 335v6M679 335v9M680 335v6M681 335v9M682 335v9M683 337v4M684 337v7M685 337v4M686 337v4M687 337v7M688 335v9M689 337v4M690 335v6M691 335v4M692 335v6M693 337v4M694 335v6M695 335v6M696 337v4M697 335v9M698 335v9M699 335v6M700 335v6M701 335v6M702 337v4M703 337v7M704 335v6M705 335v6M706 335v6M707 335v9M708 337v4M709 335v6M710 335v6M711 335v6M712 335v6M713 335v6M714 332v9M715 335v4M716 335v6M717 335v6M718 335v6M719 335v6M720 335v6M721 335v6M722 335v6M723 335v6M724 335v9M725 335v6M726 335v6M727 335v6M728 335v6M729 337v7M730 337v4M731 335v9M732 335v6M733 335v4M734 335v6M735 335v6M736 335v6M737 335v4M738 335v6M739 335v6M740 337v4M741 335v6M742 335v6M743 335v6M744 335v6M745 335v4M746 335v6M747 335v6M748 335v6M749 335v6M750 335v6M751 335v6M752 335v6M753 335v6M754 335v6M755 332v9M756 332v12M757 335v6M758 335v6M759 337v4M760 337v7M761 337v7M762 335v6M763 335v4M764 335v6M765 335v4M766 335v6M767 335v6M768 335v6M769 335v6M770 335v6M771 335v6M772 335v6M773 335v6M774 335v4M775 335v6M776 335v6M777 337v4M778 335v6M779 332v7M780 332v9M781 335v6M782 335v6M783 335v4M784 335v6M785 335v6M786 335v6M787 335v6M788 335v6M789 335v6M790 335v4M791 335v6M792 335v6M793 335v6M794 337v4M795 335v6M796 335v6M797 335v6M798 335v9M799 335v6M800 335v6M801 335v6M802 335v6M803 337v4M804 335v6M805 335v9M806 337v7M807 337v4M808 335v9M809 335v6M810 335v6M811 335v6M812 335v6M813 335v6M814 335v6M815 335v6M816 337v4M817 335v6M818 335v6M819 332v9M820 332v9M821 335v6M822 335v6M823 335v6M824 335v4M825 337v4M826 335v6M827 335v6M828 335v6M829 335v6M830 335v6M831 335v6M832 335v6M833 335v6M834 335v6M835 335v4M836 337v4M837 335v6M838 335v6M839 335v6M840 335v6M841 335v6M842 337v4M843 335v9M844 335v6M845 335v6M846 337v4M847 337v2M848 337v4M849 337v4M850 335v6M851 335v6M852 335v9M853 335v9M854 335v6M855 335v6M856 337v4M857 335v6M858 335v4M859 335v6M860 335v6M861 335v4M862 335v4M863 332v9M864 337v7M865 335v9M866 335v9M867 335v6M868 335v6M869 335v4M870 335v4M871 335v6M872 335v6M873 335v6M874 335v6M875 335v6M876 335v6M877 332v9M878 335v6M879 335v6M880 335v9M881 335v6M882 335v6M883 335v6M884 335v6M885 335v6M886 335v6M887 335v6M888 335v6M889 335v6M890 332v9M891 335v6M892 335v6M893 335v6M894 335v6M895 335v4M896 335v6M897 332v9M898 335v4M899 335v6M900 335v6M901 335v6M902 335v6M903 335v6M904 335v6M905 335v6M906 335v6M907 335v4M908 335v6M909 335v6M910 335v6M911 335v6M912 335v6M913 335v6M914 335v4M915 335v6M916 335v6M917 335v4M918 335v9M919 335v9M920 335v6M921 337v4M922 335v6M923 335v9M924 335v6M925 335v6M926 335v6M927 335v6M928 335v6M929 335v6M930 335v6M931 335v6M932 335v6M933 335v6M934 335v6M935 335v6M936 332v9M937 332v9M938 332v7M939 335v6M940 335v6M941 335v6M942 335v6M943 332v7M944 332v12M945 335v9M946 335v4M947 335v6M948 337v4M949 335v6M950 335v6M951 337v4M952 335v4M953 335v4M954 335v6M955 335v6M956 335v6M957 335v6M958 335v4M959 335v6M960 335v6M961 335v6M962 335v6M963 337v4M964 335v6M965 335v6M966 335v6M967 335v6M968 335v9M969 335v6M970 337v4M971 335v6M972 335v6M973 335v9M974 335v4M975 335v6M976 335v6M977 332v9M978 335v6M979 335v6M980 335v4M981 335v6M982 335v4M983 335v6M984 335v9M985 335v6M986 335v6M987 335v6M988 335v4M989 337v4M990 335v6M991 335v6M992 335v6M993 335v6M994 335v9M995 335v4M996 332v9M997 332v9M998 335v4M999 335v4M1000 335v6M1001 335v6M1002 335v4M1003 337v4M1004 335v6M1005 335v4M1006 335v6M1007 335v6M1008 335v6M1009 335v6M1010 335v6M1011 335v9M1012 335v6M1013 335v9M1014 337v4M1015 335v6M1016 335v4M1017 335v4M1018 335v6M1019 335v6M1020 335v6M1021 335v4M1022 335v6M1023 335v6M1024 335v6M1025 335v6M1026 335v6M1027 335v6M1028 335v6M1029 335v6M1030 332v9M1031 335v6M1032 335v6M1033 335v6M1034 335v6M1035 335v6M1036 335v6M1037 335v6M1038 335v6M1039 335v4M1040 335v6M1041 335v6M1042 332v9M1043 335v6M1044 335v6M1045 335v6M1046 335v4M1047 335v6M1048 335v6M1049 335v6M1050 335v6M1051 335v6M1052 335v6M1053 335v6M1054 335v6M1055 335v4M1056 335v6M1057 335v6M1058 335v6M1059 335v4M1060 335v4M1061 335v6" stroke="#00ffff" stroke-width="1" fill="none" shape-rendering="crispEdges" transform="translate(.5,0)"/>
<path d="M62 296v9M63 293v9M64 296v6M65 296v6M66 296v6M67 293v9M68 293v9M69 296v6M70 296v6M71 296v6M72 296v6M73 298v4M74 293v9M75 293v9M76 296v6M77 296v6M78 296v6M79 296v6M80 296v6M81 296v6M82 293v9M83 293v7M84 293v9M85 293v7M86 296v6M87 296v4M88 296v4M89 296v4M90 296v6M91 293v9M92 296v6M93 296v6M94 296v6M95 296v9M96 293v7M97 296v6M98 296v6M99 296v6M100 293v9M101 293v9M102 293v9M103 296v4M104 296v4M105 293v9M106 293v9M107 296v6M108 296v6M109 296v6M110 293v7M111 296v4M112 293v7M113 296v6M114 296v6M115 296v9M116 296v6M117 296v6M118 296v6M119 296v6M120 296v6M121 296v6M122 296v4M123 296v6M124 293v9M125 293v9M126 293v9M127 293v7M128 293v9M129 296v6M130 296v9M131 293v9M132 293v9M133 296v6M134 296v6M135 293v9M136 293v9M137 296v6M138 296v6M139 293v12M140 293v12M141 293v9M142 296v6M143 296v4M144 296v4M145 296v6M146 293v9M147 293v9M148 296v6M149 296v6M150 293v9M151 293v9M152 293v9M153 296v6M154 296v6M155 296v6M156 296v6M157 296v6M158 293v9M159 293v9M160 296v6M161 296v6M162 296v6M163 296v6M164 296v9M165 296v6M166 296v6M167 296v6M168 296v6M169 296v6M170 296v6M171 296v6M172 293v9M173 298v4M174 296v6M175 296v6M176 296v4M177 296v6M178 296v6M179 296v6M180 296v6M181 296v6M182 296v9M183 296v9M184 296v6M185 296v9M186 296v9M187 293v9M188 296v6M189 296v6M190 293v12M191 296v6M192 296v6M193 296v6M194 293v12M195 293v9M196 293v9M197 293v9M198 296v6M199 296v9M200 296v9M201 296v6M202 296v6M203 296v4M204 296v6M205 296v4M206 296v6M207 293v9M208 296v6M209 296v6M210 298v4M211 296v6M212 296v6M213 296v6M214 298v4M215 293v9M216 296v6M217 296v6M218 293v9M219 293v9M220 296v6M221 293v9M222 296v9M223 296v4M224 298v4M225 293v9M226 296v9M227 298v4M228 293v9M229 296v6M230 296v6M231 296v9M232 296v9M233 298v4M234 296v6M235 296v6M236 296v6M237 296v6M238 296v4M239 296v6M240 296v6M241 296v6M242 296v6M243 298v7M244 296v9M245 296v9M246 296v9M247 296v6M248 296v6M249 296v6M250 296v6M251 296v9M252 298v4M253 296v6M254 296v6M255 296v6M256 296v6M257 298v4M258 296v6M259 296v6M260 296v9M261 296v9M262 296v6M263 298v4M264 296v6M265 296v6M266 296v6M267 296v6M268 296v9M269 296v6M270 296v6M271 298v4M272 296v6M273 296v6M274 293v9M275 293v9M276 298v4M277 293v9M278 296v6M279 293v9M280 293v9M281 296v6M282 296v6M283 293v9M284 293v9M285 296v9M286 296v6M287 296v6M288 296v6M289 296v6M290 296v6M291 296v6M292 296v6M293 296v6M294 296v6M295 293v7M296 296v4M297 296v4M298 293v9M299 296v6M300 296v6M301 296v6M302 296v6M303 296v6M304 293v9M305 296v9M306 298v2M307 296v6M308 293v9M309 293v9M310 296v4M311 293v7M312 296v6M313 296v6M314 296v6M315 296v6M316 296v6M317 293v9M318 293v9M319 296v6M320 296v6M321 296v6M322 296v9M323 296v9M324 296v6M325 296v6M326 296v9M327 296v9M328 296v9M329 293v12M330 293v7M331 296v6M332 296v6M333 296v9M334 296v6M335 296v9M336 296v6M337 296v9M338 296v9M339 296v6M340 296v6M341 296v6M342 298v4M343 293v9M344 296v4M345 296v6M346 298v4M347 298v4M348 298v7M349 298v7M350 298v7M351 298v10M352 298v7M353 298v7M354 298v7M355 298v10M356 301v7M357 301v7M358 298v10M359 301v7M360 301v7M361 303v5M362 303v5M363 306v7M364 309v4M365 309v6M366 311v7M367 316v5M368 319v4M369 316v7M370 316v7M371 319v7M372 319v7M373 319v7M374 319v4M375 319v7M376 322v6M377 327v4M378 329v5M379 332v7M380 335v6M381 340v7M382 342v7M383 348v6M384 350v7M385 355v5M386 358v4M387 358v7M388 361v9M389 366v4M390 366v7M391 368v7M392 371v4M393 374v6M394 376v7M395 381v10M396 387v9M397 394v10M398 402v4M399 402v7M400 405v7M401 407v7M402 407v7M403 413v4M404 413v12M405 420v10M406 428v7M407 431v7M408 433v7M409 439v6M410 444v7M411 446v10M412 452v6M413 454v7M414 457v7M415 462v2M416 462v4M417 462v7M418 457v9M419 459v7M420 465v6M421 470v7M422 472v15M423 483v14M424 493v10M425 491v12M426 483v9M427 478v6M428 483v4M429 485v7M430 488v7M431 488v7M432 488v9M433 491v6M434 496v4M435 498v7M436 504v6M437 509v4M438 504v9M439 498v7M440 496v9M441 501v7M442 506v10M443 509v7M444 504v6M445 504v6M446 506v7M447 511v10M448 511v10M449 511v7M450 509v7M451 504v9M452 496v9M453 493v4M454 491v4M455 488v4M456 480v10M457 472v10M458 472v7M459 478v9M460 483v4M461 480v7M462 483v7M463 485v7M464 485v7M465 480v7M466 478v6M467 475v7M468 470v9M469 459v12M470 446v18M471 441v10M472 436v7M473 431v9M474 428v7M475 423v7M476 420v7M477 420v5M478 420v10M479 423v7M480 423v7M481 415v10M482 410v7M483 410v4M484 407v7M485 405v7M486 400v6M487 392v9M488 387v6M489 381v7M490 376v7M491 374v6M492 374v4M493 371v4M494 366v7M495 361v9M496 361v4M497 355v7M498 353v7M499 350v7M500 350v7M501 348v6M502 348v6M503 348v4M504 342v10M505 342v7M506 340v7M507 337v7M508 332v7M509 329v7M510 327v7M511 322v9M512 322v4M513 316v7M514 316v5M515 316v10M516 319v7M517 322v6M518 324v4M519 322v4M520 319v4M521 314v9M522 314v4M523 311v4M524 309v6M525 311v4M526 309v6M527 306v7M528 306v7M529 306v7M530 306v4M531 306v9M532 303v7M533 306v4M534 303v7M535 303v7M536 301v7M537 301v7M538 301v7M539 298v12M540 301v4M541 301v4M542 298v7M543 298v7M544 298v7M545 298v7M546 298v10M547 298v10M548 298v7M549 298v7M550 296v12M551 298v7M552 298v7M553 298v7M554 298v7M555 301v7M556 298v7M557 298v7M558 298v7M559 296v6M560 298v7M561 298v7M562 296v9M563 296v9M564 298v7M565 298v4M566 296v9M567 298v7M568 298v4M569 298v7M570 298v7M571 298v7M572 298v7M573 301v4M574 298v7M575 298v7M576 298v10M577 298v7M578 298v7M579 298v4M580 298v7M581 298v7M582 298v7M583 298v4M584 298v4M585 298v7M586 298v7M587 301v4M588 296v12M589 298v7M590 298v7M591 296v9M592 296v9M593 301v4M594 298v10M595 298v10M596 298v7M597 298v10M598 298v10M599 298v10M600 298v10M601 298v4M602 298v10M603 298v7M604 301v2M605 296v9M606 298v7M607 298v7M608 298v7M609 301v4M610 296v9M611 298v7M612 298v7M613 298v7M614 298v7M615 298v7M616 298v7M617 298v7M618 298v7M619 298v4M620 298v7M621 298v4M622 296v9M623 296v9M624 296v12M625 296v12M626 298v7M627 296v9M628 296v9M629 296v9M630 296v9M631 298v10M632 298v7M633 298v7M634 298v7M635 296v9M636 298v7M637 298v10M638 298v7M639 298v7M640 298v4M641 298v7M642 298v7M643 298v7M644 298v7M645 298v7M646 298v7M647 298v7M648 298v7M649 298v10M650 298v4M651 298v7M652 298v7M653 296v9M654 296v9M655 298v7M656 298v7M657 298v7M658 298v7M659 298v7M660 298v7M661 298v7M662 298v10M663 298v7M664 296v9M665 298v10M666 298v7M667 298v7M668 298v10M669 298v7M670 301v4M671 298v7M672 298v10M673 298v10M674 298v7M675 296v12M676 296v9M677 298v4M678 298v7M679 296v9M680 298v10M681 298v7M682 296v9M683 296v9M684 298v7M685 298v7M686 298v10M687 298v7M688 298v7M689 298v7M690 296v9M691 296v12M692 298v7M693 298v7M694 296v9M695 298v7M696 301v4M697 298v4M698 298v7M699 298v7M700 298v7M701 298v7M702 298v7M703 296v9M704 298v4M705 298v7M706 298v7M707 296v9M708 298v4M709 298v7M710 298v7M711 298v7M712 296v9M713 296v9M714 296v9M715 298v7M716 298v7M717 296v9M718 296v9M719 296v9M720 298v7M721 298v7M722 298v7M723 298v7M724 298v7M725 298v7M726 298v7M727 296v9M728 296v9M729 298v10M730 298v10M731 296v6M732 298v7M733 301v4M734 298v7M735 298v7M736 298v7M737 298v7M738 298v7M739 298v7M740 298v7M741 298v4M742 298v10M743 298v7M744 298v7M745 298v7M746 301v7M747 301v4M748 298v7M749 298v7M750 301v7M751 298v7M752 298v7M753 298v7M754 298v7M755 298v7M756 298v7M757 298v7M758 298v7M759 298v7M760 298v10M761 298v7M762 298v4M763 298v7M764 298v4M765 298v7M766 298v7M767 298v4M768 298v10M769 298v4M770 298v7M771 298v10M772 298v7M773 296v6M774 298v7M775 298v7M776 298v7M777 298v10M778 298v7M779 298v7M780 298v7M781 298v7M782 298v7M783 298v10M784 298v10M785 298v10M786 298v7M787 298v10M788 298v7M789 298v7M790 298v10M791 296v9M792 298v7M793 298v7M794 298v7M795 296v9M796 298v7M797 296v9M798 298v7M799 301v4M800 296v12M801 298v7M802 298v10M803 298v10M804 298v7M805 296v9M806 298v10M807 298v10M808 298v7M809 298v7M810 301v4M811 298v7M812 296v9M813 298v7M814 298v7M815 298v7M816 298v7M817 301v4M818 296v9M819 298v7M820 298v10M821 298v7M822 298v4M823 298v7M824 298v7M825 296v12M826 296v9M827 298v7M828 296v12M829 298v10M830 298v10M831 296v9M832 298v7M833 298v7M834 298v7M835 298v7M836 298v7M837 296v9M838 298v7M839 298v7M840 296v9M841 298v7M842 298v7M843 296v9M844 296v9M845 296v9M846 298v4M847 298v7M848 301v7M849 296v6M850 298v7M851 298v7M852 298v7M853 298v7M854 298v7M855 298v7M856 298v7M857 298v7M858 298v7M859 298v7M860 298v10M861 298v4M862 298v7M863 298v7M864 293v12M865 298v7M866 298v7M867 298v4M868 298v10M869 298v10M870 298v7M871 298v7M872 298v7M873 298v7M874 296v9M875 296v9M876 298v7M877 298v4M878 301v4M879 298v7M880 296v9M881 296v9M882 298v4M883 298v4M884 296v9M885 296v9M886 298v7M887 296v9M888 298v10M889 298v7M890 298v7M891 298v7M892 298v4M893 298v7M894 298v4M895 298v7M896 298v7M897 298v7M898 296v9M899 301v4M900 298v7M901 296v6M902 298v4M903 296v9M904 296v9M905 298v7M906 298v7M907 298v7M908 296v9M909 296v12M910 296v12M911 298v10M912 298v4M913 298v7M914 293v12M915 296v9M916 298v7M917 296v9M918 296v6M919 298v7M920 296v9M921 296v6M922 296v6M923 298v7M924 298v7M925 296v9M926 296v12M927 298v7M928 296v9M929 296v9M930 298v7M931 296v9M932 296v9M933 298v7M934 298v7M935 298v4M936 296v9M937 296v6M938 298v7M939 298v4M940 298v7M941 296v6M942 296v6M943 298v7M944 298v4M945 296v6M946 298v7M947 298v7M948 298v4M949 298v4M950 296v6M951 296v6M952 296v6M953 296v9M954 298v7M955 296v6M956 298v10M957 298v7M958 298v7M959 298v7M960 298v10M961 296v9M962 296v9M963 298v7M964 296v9M965 298v4M966 298v7M967 298v7M968 296v9M969 296v9M970 296v6M971 296v9M972 296v9M973 298v7M974 298v7M975 296v9M976 298v7M977 298v10M978 298v10M979 298v7M980 298v7M981 298v7M982 296v6M983 298v4M984 296v9M985 296v6M986 298v7M987 298v4M988 296v9M989 296v6M990 298v7M991 298v7M992 296v6M993 298v7M994 296v9M995 296v9M996 296v6M997 293v12M998 298v4M999 296v9M1000 298v4M1001 296v6M1002 296v6M1003 296v6M1004 298v7M1005 298v4M1006 298v7M1007 298v7M1008 298v7M1009 298v7M1010 301v4M1011 298v7M1012 296v9M1013 296v9M1014 298v10M1015 298v7M1016 298v7M1017 296v9M1018 296v9M1019 298v7M1020 298v7M1021 298v7M1022 298v4M1023 298v4M1024 296v9M1025 296v9M1026 298v7M1027 296v6M1028 298v4M1029 296v6M1030 296v9M1031 296v6M1032 296v6M1033 296v6M1034 298v7M1035 298v7M1036 298v7M1037 298v4M1038 298v10M1039 298v10M1040 296v9M1041 296v9M1042 296v6M1043 298v4M1044 296v6M1045 296v9M1046 296v6M1047 296v6M1048 298v7M1049 298v7M1050 298v7M1051 296v6M1052 298v7M1053 298v7M1054 296v9M1055 296v9M1056 298v7M1057 298v7M1058 296v9M1059 296v6M1060 298v7M1061 298v7" stroke="#ffff00" stroke-width="1" fill="none" shape-rendering="crispEdges" transform="translate(.5,0)"/>
<text x="41.500" y="226.800" font-family="'Liberation Serif',serif" font-weight="bold" font-size="20" fill="#000" stroke="#000" stroke-width=".4" textLength="30.500" lengthAdjust="spacingAndGlyphs">Tek</text>
<text class="sc" x="76.3" y="225.2" font-size="15.2" fill="#fff" stroke="#fff" stroke-width="0.22" textLength="30.5" lengthAdjust="spacing">Run</text>
<text class="sc" x="966.5" y="225.7" font-size="15.2" fill="#fff" stroke="#fff" stroke-width="0.22" textLength="39" lengthAdjust="spacing">Trig?</text>
<rect x="323" y="219" width="478" height="1" fill="#f4f400"/>
<rect x="539" y="217" width="8.500" height="11" rx="2.200" fill="#ff9c00"/>
<path d="M541 219.600h4.600M543.300 219.600v7.400" stroke="#000" stroke-width="1.500" fill="none"/>
<path d="M558.500 213h8l-3 3.500h-2z" fill="#ff9c00"/>
<rect x="562" y="213" width="2" height="14.500" fill="#9a929a"/>
<path d="M556.500 229h12l-6 6.300z" fill="#ff9c00"/>
<path d="M62.500 242.500l6-6.300h9.500a1.500 1.500 0 0 1 1.500 1.500v9.600a1.500 1.500 0 0 1-1.500 1.500h-9.500z" fill="#ff9c00"/>
<path d="M68.500 238.800h8.500M72.800 238.800v9" stroke="#000" stroke-width="1.800" fill="none"/>
<path d="M1051 705.500l6-5.500v11z" fill="#00a800"/><rect x="1057" y="705" width="5" height="1" fill="#00a800"/>
<rect x="63.500" y="286.800" width="109.300" height="15.800" fill="#000"/>
<rect x="64" y="309" width="54" height="16" fill="#000"/>
<rect x="64" y="331" width="157" height="16" fill="#000"/>
<rect x="62" y="859" width="96" height="16" fill="#000"/>
<text class="sc" x="65" y="299.8" font-size="14" fill="#fff" stroke="#fff" stroke-width="0.22" textLength="107" lengthAdjust="spacing">DriftTube SCI</text>
<text class="sc" x="65" y="321.8" font-size="14" fill="#fff" stroke="#fff" stroke-width="0.22" textLength="51" lengthAdjust="spacing">UP SCI</text>
<text class="sc" x="65" y="343.8" font-size="14" fill="#fff" stroke="#fff" stroke-width="0.22" textLength="154" lengthAdjust="spacing">DOWN CHERENKOV</text>
<text class="sc" x="65" y="871.8" font-size="14" fill="#fff" stroke="#fff" stroke-width="0.22" textLength="85" lengthAdjust="spacing">ELENA ext.</text>
<path d="M41.800 288.1 h11.800 l6.800 7.500 l-6.800 7.500 h-11.800 z" fill="#000" stroke="#b400b4" stroke-width="1.100" stroke-linejoin="round"/><text class="sc" x="48.2" y="301" font-size="14.8" fill="#b400b4" stroke="#b400b4" stroke-width="0.22" text-anchor="middle">3</text>
<path d="M41.800 310 h11.800 l6.800 7.500 l-6.800 7.500 h-11.800 z" fill="#ffff00" stroke="#ffff00" stroke-width="1.100" stroke-linejoin="round"/><text class="sc" x="48.2" y="322.9" font-size="14.8" fill="#000" stroke="#000" stroke-width="0.4" text-anchor="middle">1</text>
<path d="M41.800 332.2 h11.800 l6.800 7.500 l-6.800 7.500 h-11.800 z" fill="#000" stroke="#00e0e0" stroke-width="1.100" stroke-linejoin="round"/><text class="sc" x="48.2" y="345.1" font-size="14.8" fill="#00e0e0" stroke="#00e0e0" stroke-width="0.22" text-anchor="middle">2</text>
<path d="M41.800 860 h11.800 l6.800 7.500 l-6.800 7.500 h-11.800 z" fill="#001400" stroke="#00a000" stroke-width="1.100" stroke-linejoin="round"/><text class="sc" x="48.2" y="872.9" font-size="14.8" fill="#00a000" stroke="#00a000" stroke-width="0.22" text-anchor="middle">4</text>
<path d="M71.500 882.500H609.500a6 6 0 0 1 6 6V896.500a6 6 0 0 1-6 6H71.500a10 10 0 0 1 0-20z" fill="#000" stroke="#d8dcec" stroke-width="1"/>
<rect x="66.8" y="884.8" width="25.400" height="16" rx="10" ry="8" fill="#ffff00"/><text class="sc" x="79.5" y="898.1" font-size="14.5" fill="#000" stroke="#000" stroke-width="0.4" text-anchor="middle">1</text>
<text class="sc" x="110.5" y="898" font-size="14" fill="#ffff00" stroke="#ffff00" stroke-width="0.22" textLength="72.5" lengthAdjust="spacing">100mV Ω</text>
<rect x="205.3" y="884.8" width="25.400" height="16" rx="10" ry="8" fill="#00e0e0"/><text class="sc" x="218" y="898.1" font-size="14.5" fill="#000" stroke="#000" stroke-width="0.4" text-anchor="middle">2</text>
<text class="sc" x="248" y="898" font-size="14" fill="#00e8e8" stroke="#00e8e8" stroke-width="0.22" textLength="76" lengthAdjust="spacing">20.0mVΩ</text>
<rect x="344.8" y="884.8" width="25.400" height="16" rx="10" ry="8" fill="#b414b4"/><text class="sc" x="357.5" y="898.1" font-size="14.5" fill="#000" stroke="#000" stroke-width="0.4" text-anchor="middle">3</text>
<text class="sc" x="387.5" y="898" font-size="14" fill="#c81cc8" stroke="#c81cc8" stroke-width="0.22" textLength="74.5" lengthAdjust="spacing">500mV Ω</text>
<rect x="483.8" y="884.8" width="25.400" height="16" rx="10" ry="8" fill="#0ca00c"/><text class="sc" x="496.5" y="898.1" font-size="14.5" fill="#000" stroke="#000" stroke-width="0.4" text-anchor="middle">4</text>
<text class="sc" x="527.5" y="898" font-size="14" fill="#10b410" stroke="#10b410" stroke-width="0.22" textLength="48.5" lengthAdjust="spacing">1.00 V</text>
<text class="sc" x="601.5" y="894" font-size="8" fill="#10a010" stroke="#10a010" stroke-width="0.22">B</text>
<text class="sc" x="606.3" y="897.5" font-size="7.5" fill="#10a010" stroke="#10a010" stroke-width="0.22">W</text>
<rect x="624.5" y="882.5" width="147" height="37" rx="7" fill="#000" stroke="#d8dcec" stroke-width="1"/>
<text class="sc" x="630.3" y="898" font-size="14" fill="#fff" stroke="#fff" stroke-width="0.22" textLength="46.5" lengthAdjust="spacing">200ns</text>
<rect x="629" y="903.500" width="11.500" height="12.800" rx="2" fill="#ff9c00"/>
<path d="M631.500 906.300h6.600M634.800 906.300v8.600" stroke="#000" stroke-width="1.700" fill="none"/>
<path d="M641.300 910h6.200M645 907.300l2.700 2.700l-2.700 2.700" stroke="#ff9c00" stroke-width="1.500" fill="none"/>
<path d="M649.500 906.300h11.600l-5.800 7z" fill="#ff9c00"/>
<text class="sc" x="664.3" y="915.3" font-size="14" fill="#ff9c00" stroke="#ff9c00" stroke-width="0.22" textLength="84" lengthAdjust="spacing">311.290µs</text>
<rect x="778.5" y="882.5" width="107" height="37" rx="7" fill="#000" stroke="#d8dcec" stroke-width="1"/>
<text class="sc" x="784.8" y="898" font-size="14" fill="#fff" stroke="#fff" stroke-width="0.22" textLength="70.5" lengthAdjust="spacing">2.50GS/s</text>
<text class="sc" x="784.8" y="915.3" font-size="14" fill="#fff" stroke="#fff" stroke-width="0.22" textLength="90" lengthAdjust="spacing">20M points</text>
<rect x="891.5" y="882.5" width="171" height="37" rx="7" fill="#000" stroke="#d8dcec" stroke-width="1"/>
<rect x="922.8" y="884.8" width="25.400" height="16" rx="10" ry="8" fill="#0ca00c"/><text class="sc" x="935.5" y="898.1" font-size="14.5" fill="#000" stroke="#000" stroke-width="0.4" text-anchor="middle">4</text>
<path d="M960.500 888.500h4.500l4.500 9h4.500" stroke="#fff" stroke-width="1.700" fill="none"/>
<text class="sc" x="1006.5" y="898" font-size="14" fill="#fff" stroke="#fff" stroke-width="0.22" textLength="50" lengthAdjust="spacing">2.50 V</text>
<rect x="950.5" y="941.5" width="112" height="37" rx="7" fill="#000" stroke="#d8dcec" stroke-width="1"/>
<text class="sc" x="966.5" y="957.6" font-size="14" fill="#fff" stroke="#fff" stroke-width="0.22" textLength="91" lengthAdjust="spacing">8 Jul  2023</text>
<text class="sc" x="957.5" y="973.8" font-size="14" fill="#fff" stroke="#fff" stroke-width="0.22" textLength="69" lengthAdjust="spacing">10:57:22</text>
<g>
<rect x="61" y="926" width="114" height="53.6" rx="4.500" fill="#0c1644"/><rect x="61" y="926" width="112.600" height="52" rx="4.500" fill="#9ccaff"/><rect x="62.4" y="927.400" width="111.200" height="50.6" rx="3.500" fill="#5486e5"/>
<rect x="179" y="926" width="114" height="53.6" rx="4.500" fill="#0c1644"/><rect x="179" y="926" width="112.600" height="52" rx="4.500" fill="#9ccaff"/><rect x="180.4" y="927.400" width="111.200" height="50.6" rx="3.500" fill="#5486e5"/>
<rect x="297" y="926" width="114" height="53.6" rx="4.500" fill="#0c1644"/><rect x="297" y="926" width="112.600" height="52" rx="4.500" fill="#9ccaff"/><rect x="298.4" y="927.400" width="111.200" height="50.6" rx="3.500" fill="#5486e5"/>
<rect x="415" y="926" width="114" height="53.6" rx="4.500" fill="#0c1644"/><rect x="415" y="926" width="112.600" height="52" rx="4.500" fill="#9ccaff"/><rect x="416.4" y="927.400" width="111.200" height="50.6" rx="3.500" fill="#5486e5"/>
<rect x="533" y="926" width="114" height="53.6" rx="4.500" fill="#0c1644"/><rect x="533" y="926" width="112.600" height="52" rx="4.500" fill="#9ccaff"/><rect x="534.4" y="927.400" width="111.200" height="50.6" rx="3.500" fill="#5486e5"/>
<rect x="651" y="926" width="114" height="53.6" rx="4.500" fill="#0c1644"/><rect x="651" y="926" width="112.600" height="52" rx="4.500" fill="#9ccaff"/><rect x="652.4" y="927.400" width="111.200" height="50.6" rx="3.500" fill="#5486e5"/>
<text class="sc" x="118" y="949.6" font-size="14.5" fill="#000" stroke="#000" stroke-width="0.4" textLength="44" lengthAdjust="spacing" text-anchor="middle">Mode</text>
<rect x="90" y="954" width="57" height="16" fill="#c2cae8"/>
<text class="sc" x="118.5" y="967" font-size="14.5" fill="#000" stroke="#000" stroke-width="0.4" textLength="55" lengthAdjust="spacing" text-anchor="middle">Sample</text>
<text class="sc" x="236.5" y="941" font-size="14.5" fill="#000" stroke="#000" stroke-width="0.4" textLength="53" lengthAdjust="spacing" text-anchor="middle">Record</text>
<text class="sc" x="236.5" y="958" font-size="14.5" fill="#000" stroke="#000" stroke-width="0.4" textLength="54" lengthAdjust="spacing" text-anchor="middle">Length</text>
<rect x="219" y="962" width="35" height="16" fill="#c2cae8"/>
<text class="sc" x="236.5" y="975" font-size="14.5" fill="#000" stroke="#000" stroke-width="0.4" textLength="33" lengthAdjust="spacing" text-anchor="middle">20M</text>
<rect x="298.500" y="940" width="111" height="40" fill="#5585e6"/><rect x="297" y="940" width="1.500" height="40" fill="#7cb2ff"/><rect x="409.500" y="940" width="1.500" height="40" fill="#1a2868"/>
<text class="sc" x="354" y="944.6" font-size="14.5" fill="#000" stroke="#000" stroke-width="0.4" textLength="42" lengthAdjust="spacing" text-anchor="middle">Delay</text>
<rect x="309.500" y="954" width="31.500" height="26" rx="3.500" fill="#c2cae8"/>
<text class="sc" x="325" y="971.6" font-size="15.6" fill="#000" stroke="#000" stroke-width="0.4" text-anchor="middle">On</text>
<text class="sc" x="382.6" y="971.6" font-size="15.6" fill="#000" stroke="#000" stroke-width="0.4" text-anchor="middle">Off</text>
<text class="sc" x="472" y="940" font-size="14.5" fill="#000" stroke="#000" stroke-width="0.4" textLength="78" lengthAdjust="spacing" text-anchor="middle">Set Horiz.</text>
<text class="sc" x="472" y="957.5" font-size="14.5" fill="#000" stroke="#000" stroke-width="0.4" textLength="65" lengthAdjust="spacing" text-anchor="middle">Position</text>
<text class="sc" x="472" y="974.3" font-size="14.5" fill="#000" stroke="#000" stroke-width="0.4" textLength="44" lengthAdjust="spacing" text-anchor="middle">to 0 s</text>
<text class="sc" x="590" y="949.6" font-size="14.5" fill="#000" stroke="#000" stroke-width="0.4" textLength="79" lengthAdjust="spacing" text-anchor="middle">Waveform</text>
<text class="sc" x="590" y="967" font-size="14.5" fill="#000" stroke="#000" stroke-width="0.4" textLength="56" lengthAdjust="spacing" text-anchor="middle">Display</text>
<text class="sc" x="708" y="949.6" font-size="14.5" fill="#000" stroke="#000" stroke-width="0.4" textLength="83" lengthAdjust="spacing" text-anchor="middle">XY Display</text>
<rect x="696" y="954" width="25" height="16" fill="#c2cae8"/>
<text class="sc" x="708.5" y="967" font-size="15.6" fill="#000" stroke="#000" stroke-width="0.4" text-anchor="middle">Off</text>
</g>
</g>
<defs><linearGradient id="tu" x1="0" y1="1024" x2="0" y2="1035.500" gradientUnits="userSpaceOnUse"><stop offset="0" stop-color="#4f86d0"/><stop offset="1" stop-color="#1f4488"/></linearGradient><linearGradient id="td" x1="0" y1="1041.500" x2="0" y2="1053" gradientUnits="userSpaceOnUse"><stop offset="0" stop-color="#5c92d8"/><stop offset="1" stop-color="#1c3c7c"/></linearGradient></defs>
<rect x="36" y="1004" width="233" height="52" fill="#20204e"/>
<text class="ab" x="152.300" y="1017" font-size="12" fill="#fff" text-anchor="middle">subsystem</text>
<rect x="37" y="1022" width="57" height="16" fill="#7c7c84"/><rect x="37" y="1022" width="55.5" height="14.5" fill="#ffffff"/><rect x="38.5" y="1023.5" width="53.5" height="12.5" fill="#e6e6e6"/><text class="ab" x="65.2" y="1033.6" font-size="10" fill="#2860a8" stroke="#2860a8" stroke-width=".3" text-anchor="middle">SEARCH</text>
<rect x="95" y="1022" width="37.5" height="16" fill="#7c7c84"/><rect x="95" y="1022" width="36" height="14.5" fill="#ffffff"/><rect x="96.5" y="1023.5" width="34" height="12.5" fill="#e6e6e6"/><text class="ab" x="113.45" y="1033.6" font-size="10" fill="#2860a8" stroke="#2860a8" stroke-width=".3" text-anchor="middle">TRIG</text>
<rect x="133" y="1022" width="52.5" height="16" fill="#7c7c84"/><rect x="133" y="1022" width="51" height="14.5" fill="#ffffff"/><rect x="134.5" y="1023.5" width="49" height="12.5" fill="#e6e6e6"/><text class="ab" x="158.95" y="1033.6" font-size="10" fill="#2860a8" stroke="#2860a8" stroke-width=".3" text-anchor="middle">MISC</text>
<rect x="186" y="1022" width="40" height="16" fill="#7c7c84"/><rect x="186" y="1022" width="38.5" height="14.5" fill="#ffffff"/><rect x="187.5" y="1023.5" width="36.5" height="12.5" fill="#e6e6e6"/><text class="ab" x="205.7" y="1033.6" font-size="10" fill="#2860a8" stroke="#2860a8" stroke-width=".3" text-anchor="middle">VERT</text>
<rect x="227" y="1022" width="41" height="16" fill="#7c7c84"/><rect x="227" y="1022" width="39.5" height="14.5" fill="#ffffff"/><rect x="228.5" y="1023.5" width="37.5" height="12.5" fill="#e6e6e6"/><text class="ab" x="247.2" y="1033.6" font-size="10" fill="#2860a8" stroke="#2860a8" stroke-width=".3" text-anchor="middle">FREQ</text>
<rect x="37" y="1039" width="57" height="16" fill="#7c7c84"/><rect x="37" y="1039" width="55.5" height="14.5" fill="#ffffff"/><rect x="38.5" y="1040.5" width="53.5" height="12.5" fill="#e6e6e6"/><text class="ab" x="65.2" y="1050.6" font-size="10" fill="#2860a8" stroke="#2860a8" stroke-width=".3" text-anchor="middle">HORIZ</text>
<rect x="95" y="1039" width="37.5" height="16" fill="#7c7c84"/><rect x="95" y="1039" width="36" height="14.5" fill="#ffffff"/><rect x="96.5" y="1040.5" width="34" height="12.5" fill="#e6e6e6"/><text class="ab" x="113.45" y="1050.6" font-size="10" fill="#2860a8" stroke="#2860a8" stroke-width=".3" text-anchor="middle">ACQ</text>
<rect x="133" y="1039" width="52.5" height="16" fill="#7c7c84"/><rect x="133" y="1039" width="51" height="14.5" fill="#ffffff"/><rect x="134.5" y="1040.5" width="49" height="12.5" fill="#e6e6e6"/><text class="ab" x="158.95" y="1050.6" font-size="10" fill="#2860a8" stroke="#2860a8" stroke-width=".3" text-anchor="middle">CURSOR</text>
<rect x="186" y="1039" width="40" height="16" fill="#7c7c84"/><rect x="186" y="1039" width="38.5" height="14.5" fill="#ffffff"/><rect x="187.5" y="1040.5" width="36.5" height="12.5" fill="#e6e6e6"/><text class="ab" x="205.7" y="1050.6" font-size="10" fill="#2860a8" stroke="#2860a8" stroke-width=".3" text-anchor="middle">MEAS</text>
<rect x="272" y="1004" width="177" height="52" fill="#20204e"/>
<text class="ab" x="312" y="1017" font-size="12" fill="#fff" text-anchor="middle">trigger</text>
<text class="ab" x="423.500" y="1017" font-size="12" fill="#fff" text-anchor="middle">level</text>
<rect x="273" y="1022" width="78" height="16" fill="#7c7c84"/><rect x="273" y="1022" width="76.5" height="14.5" fill="#ffffff"/><rect x="274.5" y="1023.5" width="74.5" height="12.5" fill="#e6e6e6"/><text class="ab" x="311.7" y="1033.6" font-size="10" fill="#2860a8" stroke="#2860a8" stroke-width=".3" text-anchor="middle">SET TO 50%</text>
<rect x="273" y="1039" width="78" height="16" fill="#7c7c84"/><rect x="273" y="1039" width="76.5" height="14.5" fill="#ffffff"/><rect x="274.5" y="1040.5" width="74.5" height="12.5" fill="#e6e6e6"/><text class="ab" x="311.7" y="1050.6" font-size="10" fill="#2860a8" stroke="#2860a8" stroke-width=".3" text-anchor="middle">FORCE TRIG</text>
<rect x="352.5" y="1039" width="45.5" height="16" fill="#7c7c84"/><rect x="352.5" y="1039" width="44" height="14.5" fill="#ffffff"/><rect x="354" y="1040.5" width="42" height="12.5" fill="#e6e6e6"/><text class="ab" x="374.95" y="1050.6" font-size="10" fill="#2860a8" stroke="#2860a8" stroke-width=".3" text-anchor="middle">MENU</text>
<rect x="400" y="1022" width="48" height="16" fill="#fbfbfd"/><rect x="400" y="1039" width="48" height="16" fill="#fbfbfd"/><path d="M414.2 1024l6.9 11.4h-13.8zM429.2 1029.1l4.1 6.3h-8.2zM439.1 1031.8l2.2 3.6h-4.4z" fill="url(#tu)"/><path d="M414.2 1053l6.9 -11.4h-13.8zM429.2 1047.9l4.1 -6.3h-8.2zM439.1 1045.2l2.2 -3.6h-4.4z" fill="url(#td)"/>
<rect x="452" y="1004" width="144" height="52" fill="#20204e"/>
<circle cx="473.3" cy="1013.300" r="8" fill="#ff4a00"/>
<text class="ab" x="473.3" y="1018" font-size="15" fill="#000" text-anchor="middle">a</text>
<circle cx="575.8" cy="1013.300" r="8" fill="#ff4a00"/>
<text class="ab" x="575.8" y="1018" font-size="15" fill="#000" text-anchor="middle">b</text>
<rect x="453" y="1022" width="39" height="16" fill="#fbfbfd"/><rect x="453" y="1039" width="39" height="16" fill="#fbfbfd"/><path d="M462.7 1024l6.9 11.4h-13.8zM477.7 1029.1l4.1 6.3h-8.2zM487.6 1031.8l2.2 3.6h-4.4z" fill="url(#tu)"/><path d="M462.7 1053l6.9 -11.4h-13.8zM477.7 1047.9l4.1 -6.3h-8.2zM487.6 1045.2l2.2 -3.6h-4.4z" fill="url(#td)"/>
<rect x="493" y="1022" width="62.5" height="16" fill="#7c7c84"/><rect x="493" y="1022" width="61" height="14.5" fill="#ffffff"/><rect x="494.5" y="1023.5" width="59" height="12.5" fill="#e6e6e6"/><text class="ab" x="523.95" y="1033.6" font-size="10" fill="#2860a8" stroke="#2860a8" stroke-width=".3" text-anchor="middle">SELECT</text>
<rect x="493" y="1039" width="62.5" height="16" fill="#7c7c84"/><rect x="493" y="1039" width="61" height="14.5" fill="#ffffff"/><rect x="494.5" y="1040.5" width="59" height="12.5" fill="#e6e6e6"/><text class="ab" x="523.95" y="1050.6" font-size="10" fill="#2860a8" stroke="#2860a8" stroke-width=".3" text-anchor="middle">MENU OFF</text>
<rect x="556.5" y="1022" width="38.5" height="16" fill="#fbfbfd"/><rect x="556.5" y="1039" width="38.5" height="16" fill="#fbfbfd"/><path d="M565.95 1024l6.9 11.4h-13.8zM580.95 1029.1l4.1 6.3h-8.2zM590.85 1031.8l2.2 3.6h-4.4z" fill="url(#tu)"/><path d="M565.95 1053l6.9 -11.4h-13.8zM580.95 1047.9l4.1 -6.3h-8.2zM590.85 1045.2l2.2 -3.6h-4.4z" fill="url(#td)"/>
<rect x="599" y="1004" width="41" height="52" fill="#20204e"/>
<text class="ab" x="619.5" y="1014" font-size="12" fill="#fff" text-anchor="middle">zoom</text>
<rect x="600" y="1022" width="39" height="16" fill="#fbfbfd"/><rect x="600" y="1039" width="39" height="16" fill="#fbfbfd"/><path d="M609.7 1024l6.9 11.4h-13.8zM624.7 1029.1l4.1 6.3h-8.2zM634.6 1031.8l2.2 3.6h-4.4z" fill="url(#tu)"/><path d="M609.7 1053l6.9 -11.4h-13.8zM624.7 1047.9l4.1 -6.3h-8.2zM634.6 1045.2l2.2 -3.6h-4.4z" fill="url(#td)"/>
<rect x="643" y="1004" width="41" height="52" fill="#20204e"/>
<text class="ab" x="663.5" y="1014" font-size="12" fill="#fff" text-anchor="middle">pan</text>
<rect x="644" y="1022" width="39" height="16" fill="#fbfbfd"/><rect x="644" y="1039" width="39" height="16" fill="#fbfbfd"/><path d="M653.7 1024l6.9 11.4h-13.8zM668.7 1029.1l4.1 6.3h-8.2zM678.6 1031.8l2.2 3.6h-4.4z" fill="url(#tu)"/><path d="M653.7 1053l6.9 -11.4h-13.8zM668.7 1047.9l4.1 -6.3h-8.2zM678.6 1045.2l2.2 -3.6h-4.4z" fill="url(#td)"/>
<rect x="687" y="1004" width="106.500" height="52" fill="#20204e"/>
<rect x="688" y="1005" width="16" height="16" fill="#7c7c84"/><rect x="688" y="1005" width="14.5" height="14.5" fill="#ffffff"/><rect x="689.5" y="1006.5" width="12.5" height="12.5" fill="#e6e6e6"/><text class="ab" x="695.7" y="1016.96" font-size="11" fill="#2860a8" stroke="#2860a8" stroke-width=".3" text-anchor="middle">1</text>
<rect x="705" y="1005" width="16" height="16" fill="#7c7c84"/><rect x="705" y="1005" width="14.5" height="14.5" fill="#ffffff"/><rect x="706.5" y="1006.5" width="12.5" height="12.5" fill="#e6e6e6"/><text class="ab" x="712.7" y="1016.96" font-size="11" fill="#2860a8" stroke="#2860a8" stroke-width=".3" text-anchor="middle">2</text>
<rect x="722" y="1005" width="16.5" height="16" fill="#7c7c84"/><rect x="722" y="1005" width="15" height="14.5" fill="#ffffff"/><rect x="723.5" y="1006.5" width="13" height="12.5" fill="#e6e6e6"/><text class="ab" x="729.95" y="1016.96" font-size="11" fill="#2860a8" stroke="#2860a8" stroke-width=".3" text-anchor="middle">3</text>
<rect x="739.5" y="1005" width="15.5" height="16" fill="#7c7c84"/><rect x="739.5" y="1005" width="14" height="14.5" fill="#ffffff"/><rect x="741" y="1006.5" width="12" height="12.5" fill="#e6e6e6"/><text class="ab" x="746.95" y="1016.96" font-size="11" fill="#2860a8" stroke="#2860a8" stroke-width=".3" text-anchor="middle">.</text>
<rect x="688" y="1022" width="16" height="16" fill="#7c7c84"/><rect x="688" y="1022" width="14.5" height="14.5" fill="#ffffff"/><rect x="689.5" y="1023.5" width="12.5" height="12.5" fill="#e6e6e6"/><text class="ab" x="695.7" y="1033.96" font-size="11" fill="#2860a8" stroke="#2860a8" stroke-width=".3" text-anchor="middle">4</text>
<rect x="705" y="1022" width="16" height="16" fill="#7c7c84"/><rect x="705" y="1022" width="14.5" height="14.5" fill="#ffffff"/><rect x="706.5" y="1023.5" width="12.5" height="12.5" fill="#e6e6e6"/><text class="ab" x="712.7" y="1033.96" font-size="11" fill="#2860a8" stroke="#2860a8" stroke-width=".3" text-anchor="middle">5</text>
<rect x="722" y="1022" width="16.5" height="16" fill="#7c7c84"/><rect x="722" y="1022" width="15" height="14.5" fill="#ffffff"/><rect x="723.5" y="1023.5" width="13" height="12.5" fill="#e6e6e6"/><text class="ab" x="729.95" y="1033.96" font-size="11" fill="#2860a8" stroke="#2860a8" stroke-width=".3" text-anchor="middle">6</text>
<rect x="739.5" y="1022" width="15.5" height="16" fill="#7c7c84"/><rect x="739.5" y="1022" width="14" height="14.5" fill="#ffffff"/><rect x="741" y="1023.5" width="12" height="12.5" fill="#e6e6e6"/><text class="ab" x="746.95" y="1033.96" font-size="11" fill="#2860a8" stroke="#2860a8" stroke-width=".3" text-anchor="middle">0</text>
<rect x="688" y="1039" width="16" height="16" fill="#7c7c84"/><rect x="688" y="1039" width="14.5" height="14.5" fill="#ffffff"/><rect x="689.5" y="1040.5" width="12.5" height="12.5" fill="#e6e6e6"/><text class="ab" x="695.7" y="1050.96" font-size="11" fill="#2860a8" stroke="#2860a8" stroke-width=".3" text-anchor="middle">7</text>
<rect x="705" y="1039" width="16" height="16" fill="#7c7c84"/><rect x="705" y="1039" width="14.5" height="14.5" fill="#ffffff"/><rect x="706.5" y="1040.5" width="12.5" height="12.5" fill="#e6e6e6"/><text class="ab" x="712.7" y="1050.96" font-size="11" fill="#2860a8" stroke="#2860a8" stroke-width=".3" text-anchor="middle">8</text>
<rect x="722" y="1039" width="16.5" height="16" fill="#7c7c84"/><rect x="722" y="1039" width="15" height="14.5" fill="#ffffff"/><rect x="723.5" y="1040.5" width="13" height="12.5" fill="#e6e6e6"/><text class="ab" x="729.95" y="1050.96" font-size="11" fill="#2860a8" stroke="#2860a8" stroke-width=".3" text-anchor="middle">9</text>
<rect x="739.5" y="1039" width="15.5" height="16" fill="#7c7c84"/><rect x="739.5" y="1039" width="14" height="14.5" fill="#ffffff"/><rect x="741" y="1040.5" width="12" height="12.5" fill="#e6e6e6"/><text class="ab" x="746.95" y="1050.96" font-size="11" fill="#2860a8" stroke="#2860a8" stroke-width=".3" text-anchor="middle">–</text>
<rect x="756" y="1005" width="36.5" height="23.5" fill="#7c7c84"/><rect x="756" y="1005" width="35" height="22" fill="#ffffff"/><rect x="757.5" y="1006.5" width="33" height="20" fill="#e6e6e6"/>
<text class="ab" x="774" y="1016.500" font-size="11.500" fill="#2860a8" text-anchor="middle">Bksp</text>
<path d="M781 1023h-11M773.500 1020l-3.500 3l3.500 3" stroke="#2860a8" stroke-width="1.600" fill="none"/>
<rect x="756" y="1031" width="36.5" height="24" fill="#7c7c84"/><rect x="756" y="1031" width="35" height="22.5" fill="#ffffff"/><rect x="757.5" y="1032.5" width="33" height="20.5" fill="#e6e6e6"/>
<text class="ab" x="774" y="1042.300" font-size="11.500" fill="#2860a8" text-anchor="middle">Enter</text>
<path d="M781 1045v4h-11M773.500 1046l-3.500 3l3.500 3" stroke="#2860a8" stroke-width="1.600" fill="none"/>
<path d="M25.500 108V1064.500H1079.500V108" stroke="#333" stroke-width="1" fill="none"/>
</svg>
</div>
</body></html>
